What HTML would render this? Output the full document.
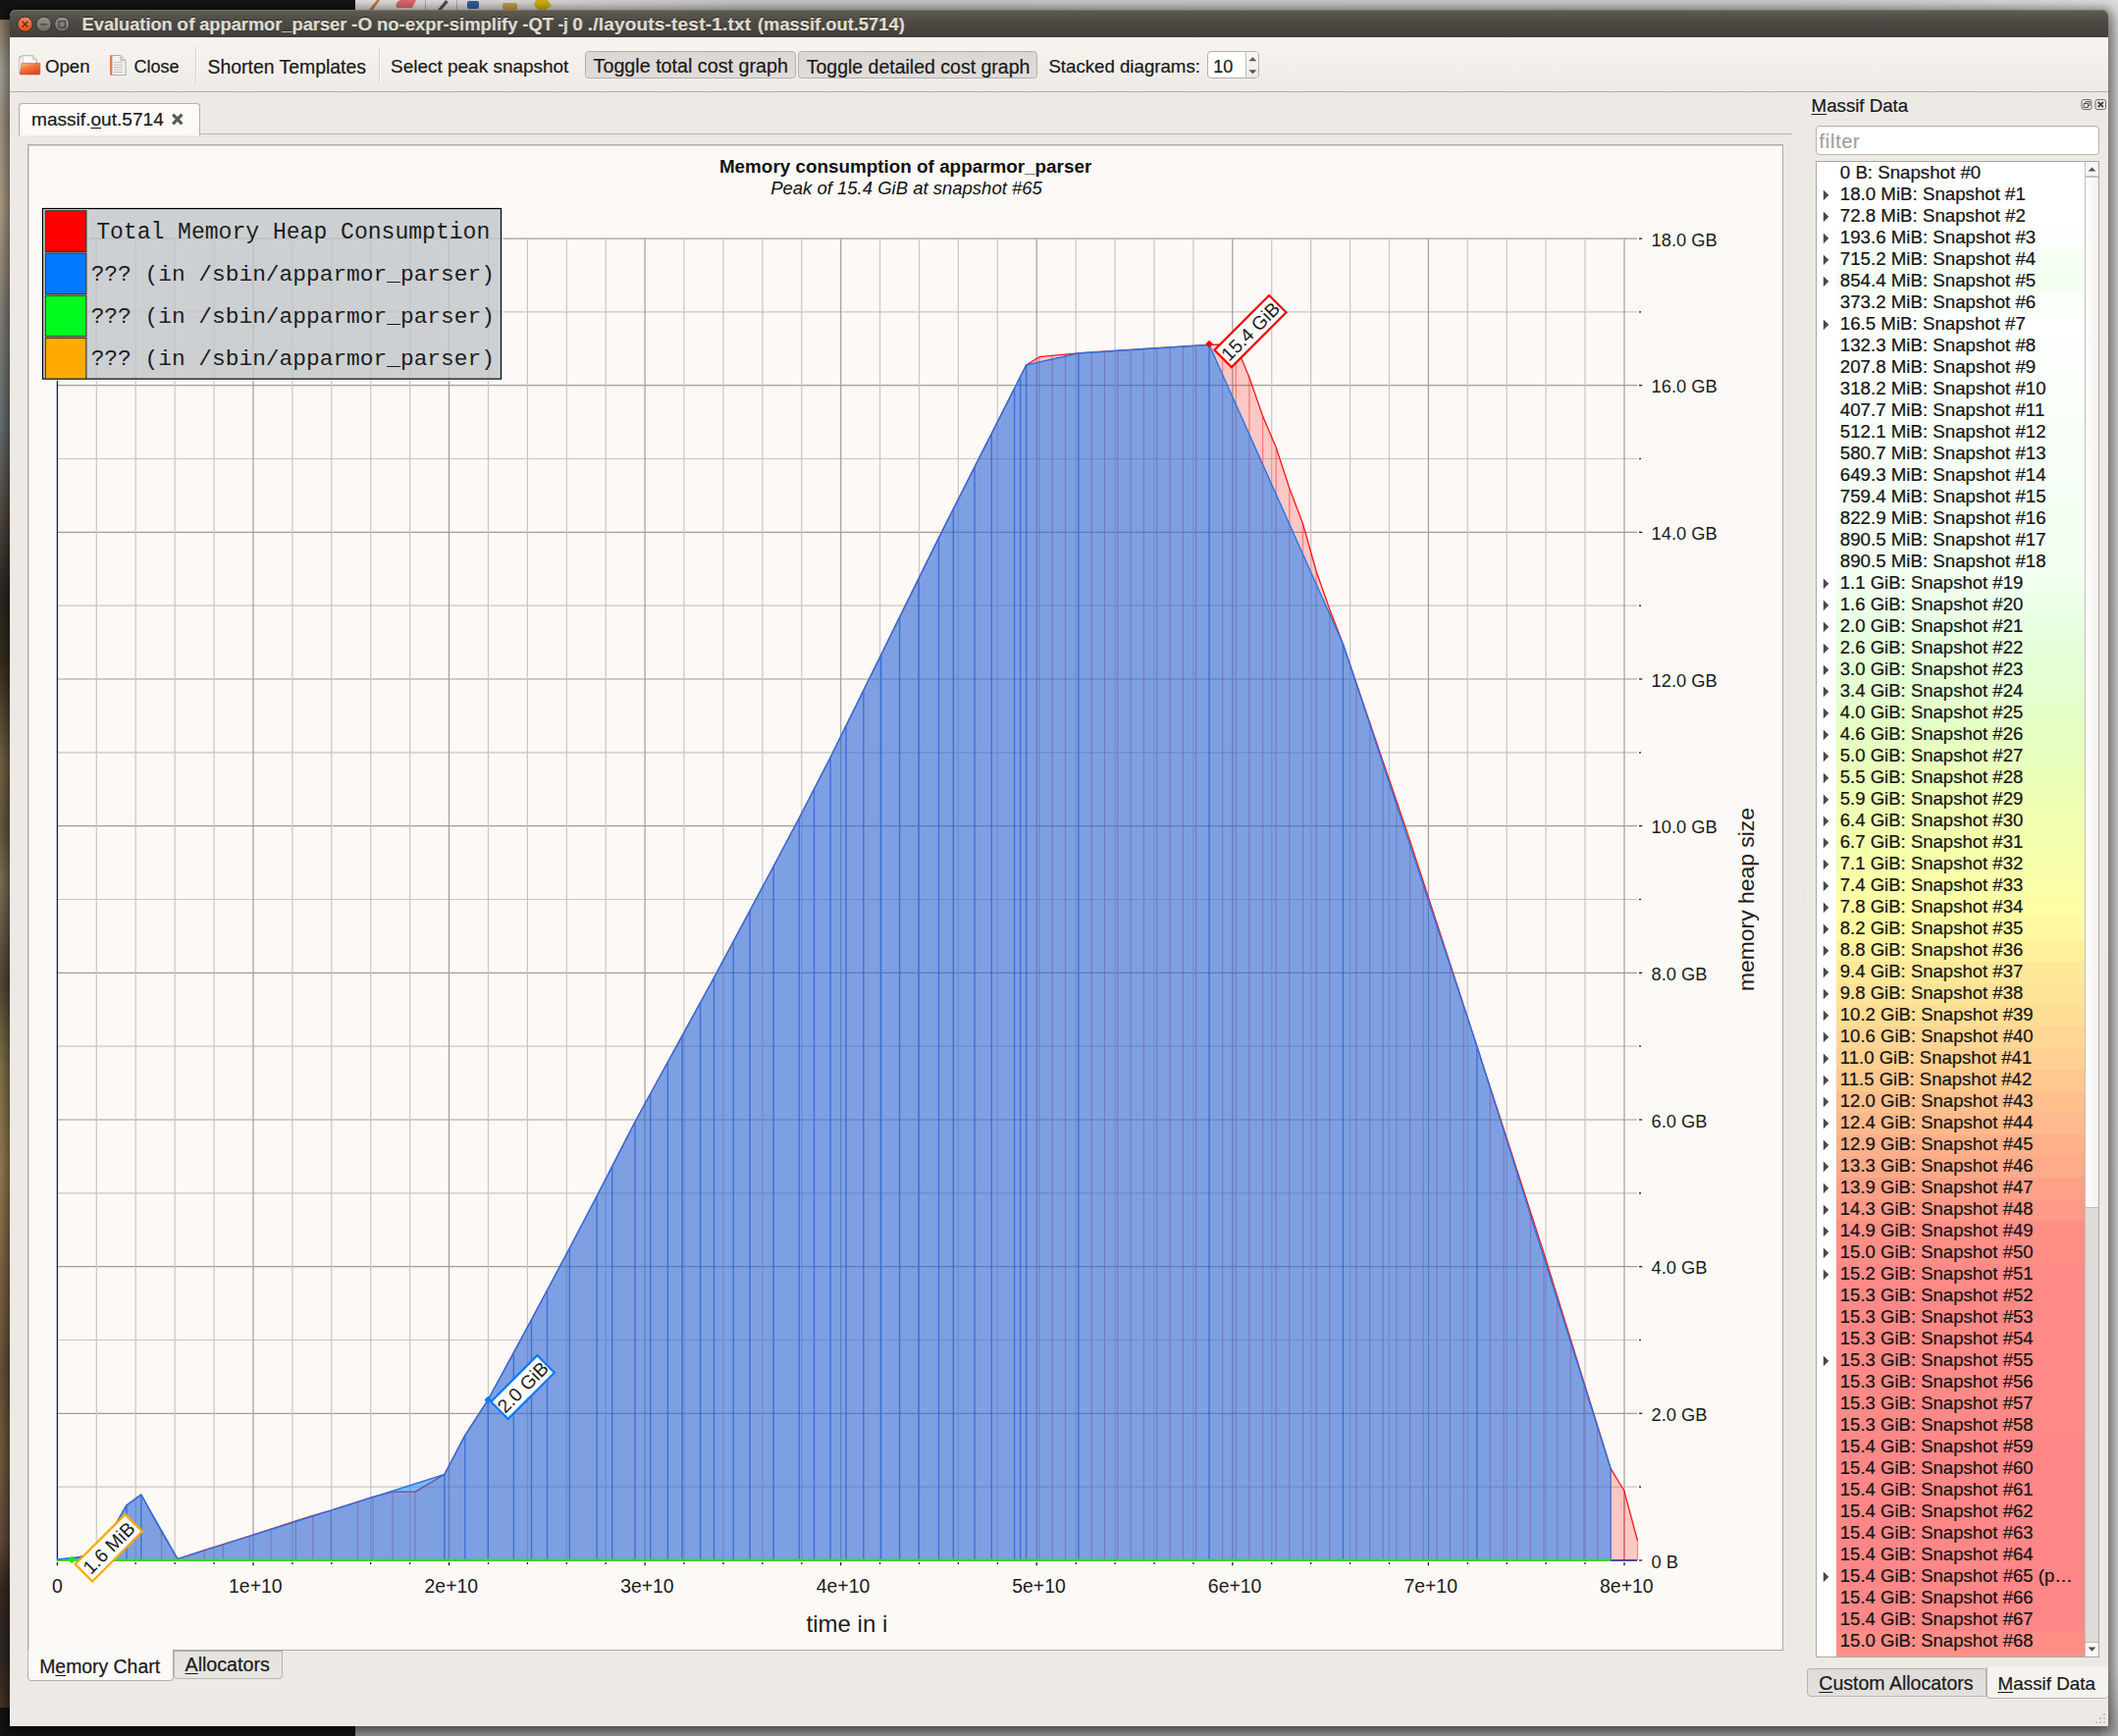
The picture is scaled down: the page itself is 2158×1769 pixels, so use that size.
<!DOCTYPE html>
<html><head><meta charset="utf-8"><title>Massif Visualizer</title>
<style>
html,body{margin:0;padding:0}
body{width:2158px;height:1769px;position:relative;overflow:hidden;background:#141414;font-family:"Liberation Sans",sans-serif}
.a{position:absolute}
.t{position:absolute;line-height:0;white-space:nowrap;-webkit-text-stroke:0.22px currentColor}
u{text-decoration:underline;text-underline-offset:2px;text-decoration-thickness:1px}
.row{position:absolute;left:1871px;width:253.5px;height:22px}
</style></head><body>

<div class="a" style="left:0;top:0;width:2158px;height:1769px;background:#141414"></div>
<div class="a" style="left:0;top:20px;width:12px;height:1720px;background:linear-gradient(180deg,#8f7f66 0%,#b0aaa2 3%,#a89c8c 6%,#b9a78d 11%,#8f8a80 17%,#6f7878 24%,#5b5148 29%,#2e2a22 34%,#3a301f 38%,#7b6a49 44%,#6e5f45 48%,#86795e 51%,#5a4c38 57%,#8a7a50 62%,#a08455 68%,#8a6b4c 74%,#6f5a3b 80%,#7a6242 85%,#6a5040 90%,#3a2e24 93%,#332a24 97%,#4a392a 100%)"></div>
<div class="a" style="left:362px;top:0;width:1796px;height:12px;background:linear-gradient(90deg,#e4e2df 0,#dcdad7 200px,#c9c9c9 400px,#cfcfcf 1500px,#e2e2e2 1796px)"></div>
<div class="a" style="left:362px;top:1750px;width:1796px;height:19px;background:#a2a2a2"></div>
<div class="a" style="left:2140px;top:0;width:18px;height:1769px;background:linear-gradient(180deg,#dedede 0,#d2d2d2 40px,#d0d0d0 1700px,#a8a8a8 1769px)"></div>
<svg class="a" style="left:362px;top:0" width="220" height="10"><path d="M14 10 L22 0 L25 0 L18 10Z" fill="#c77a3a"/><path d="M42 8 Q40 2 46 0 L62 0 L58 8Z" fill="#e36a6a"/><rect x="71" y="0" width="1" height="10" fill="#aaa"/><path d="M84 10 L92 0 L95 2 L88 10Z" fill="#555"/><rect x="103" y="0" width="1" height="10" fill="#aaa"/><rect x="114" y="1" width="12" height="8" rx="2" fill="#3a5f9a"/><rect x="150" y="3" width="15" height="7" rx="2" fill="#c9a24a"/><path d="M184 0 L196 0 L200 6 L194 10 L186 10 L182 5Z" fill="#d4b20f"/></svg>
<div class="a" style="left:10px;top:10px;width:2138px;height:1749px;background:#edeae6;border-radius:6px 6px 0 0;box-shadow:0 3px 12.5px 3.8px rgba(0,0,0,.55)"></div>
<div class="a" style="left:10px;top:10px;width:2138px;height:28px;background:linear-gradient(180deg,#5f5c53 0,#4d4a43 45%,#403e38 100%);border-radius:6px 6px 0 0;box-shadow:inset 0 1px 0 #75726a"></div>
<svg class="a" style="left:14px;top:13px" width="64" height="24" viewBox="0 0 64 24">
<defs><linearGradient id="gc" x1="0" y1="0" x2="0" y2="1"><stop offset="0" stop-color="#f58a5c"/><stop offset="1" stop-color="#dc4a18"/></linearGradient>
<linearGradient id="gg" x1="0" y1="0" x2="0" y2="1"><stop offset="0" stop-color="#97948b"/><stop offset="1" stop-color="#6d6a63"/></linearGradient></defs>
<circle cx="11.5" cy="11.7" r="7.6" fill="url(#gc)" stroke="#3a2a22" stroke-width="1"/>
<path d="M9 9.2 L14 14.2 M14 9.2 L9 14.2" stroke="#4a1c0a" stroke-width="1.15" stroke-linecap="round"/>
<circle cx="30.6" cy="11.7" r="7.6" fill="url(#gg)" stroke="#34332f" stroke-width="1"/>
<path d="M27.2 11.9 L34 11.9" stroke="#3b3a36" stroke-width="1.15"/>
<circle cx="49.2" cy="11.7" r="7.6" fill="url(#gg)" stroke="#34332f" stroke-width="1"/>
<rect x="46" y="8.7" width="6.4" height="6.2" fill="none" stroke="#3b3a36" stroke-width="1.1"/>
</svg>
<span class="t" style="left:83.6px;top:24.98px;font-size:18.23px;color:#dfdbd2;font-weight:bold;font-style:normal;letter-spacing:0.00px;text-shadow:0 -1px 0 rgba(0,0,0,.5)">Evaluation</span>
<span class="t" style="left:180.3px;top:24.72px;font-size:19.0px;color:#dfdbd2;font-weight:bold;font-style:normal;letter-spacing:0.23px;text-shadow:0 -1px 0 rgba(0,0,0,.5)">of</span>
<span class="t" style="left:203.2px;top:24.97px;font-size:18.26px;color:#dfdbd2;font-weight:bold;font-style:normal;letter-spacing:0.00px;text-shadow:0 -1px 0 rgba(0,0,0,.5)">apparmor_parser</span>
<span class="t" style="left:357.9px;top:24.72px;font-size:19.0px;color:#dfdbd2;font-weight:bold;font-style:normal;letter-spacing:0.25px;text-shadow:0 -1px 0 rgba(0,0,0,.5)">-O</span>
<span class="t" style="left:384.0px;top:24.90px;font-size:18.46px;color:#dfdbd2;font-weight:bold;font-style:normal;letter-spacing:0.00px;text-shadow:0 -1px 0 rgba(0,0,0,.5)">no-expr-simplify</span>
<span class="t" style="left:532.3px;top:24.94px;font-size:18.36px;color:#dfdbd2;font-weight:bold;font-style:normal;letter-spacing:0.00px;text-shadow:0 -1px 0 rgba(0,0,0,.5)">-QT</span>
<span class="t" style="left:568.4px;top:25.20px;font-size:17.6px;color:#dfdbd2;font-weight:bold;font-style:normal;letter-spacing:-0.17px;text-shadow:0 -1px 0 rgba(0,0,0,.5)">-j</span>
<span class="t" style="left:583.3px;top:24.72px;font-size:19.0px;color:#dfdbd2;font-weight:bold;font-style:normal;letter-spacing:0.43px;text-shadow:0 -1px 0 rgba(0,0,0,.5)">0</span>
<span class="t" style="left:598.8px;top:24.72px;font-size:19.0px;color:#dfdbd2;font-weight:bold;font-style:normal;letter-spacing:0.19px;text-shadow:0 -1px 0 rgba(0,0,0,.5)">./layouts-test-1.txt</span>
<span class="t" style="left:772.0px;top:24.95px;font-size:18.33px;color:#dfdbd2;font-weight:bold;font-style:normal;letter-spacing:0.00px;text-shadow:0 -1px 0 rgba(0,0,0,.5)">(massif.out.5714)</span>
<div class="a" style="left:10px;top:38px;width:2138px;height:55px;background:linear-gradient(180deg,#f8f5f1,#eeebe7)"></div>
<div class="a" style="left:10px;top:93px;width:2138px;height:1px;background:#b4b1ad"></div>
<svg class="a" style="left:18px;top:54px" width="25" height="24" viewBox="0 0 25 24">
<defs><linearGradient id="of" x1="0" y1="0" x2="0.6" y2="1"><stop offset="0" stop-color="#f6c08c"/><stop offset=".45" stop-color="#ee7a45"/><stop offset="1" stop-color="#e5431a"/></linearGradient></defs>
<path d="M1.6 3.5 h3 v-1 h10.8 l4.1 4 v14.3 h-17.9z" fill="#f1f0ee" stroke="#bcbab6" stroke-width=".9"/>
<path d="M5.6 3 h9.5 l3.6 3.6 v6 h-13.1z" fill="#fbfbfa" stroke="#c9c7c3" stroke-width=".7"/>
<path d="M15.2 2.8 v3.8 h3.6" fill="#e3e1dd" stroke="#bcbab6" stroke-width=".7"/>
<rect x="2.4" y="4.6" width="1.8" height="1" fill="#f0b070"/>
<path d="M4.2 10.4 h18.6 v10.6 q0 .9 -.9 .9 h-18.6 q-1 0 -.9 -1z" fill="url(#of)" stroke="#d9481d" stroke-width=".6"/>
</svg>
<span class="t" style="left:45.9px;top:67.82px;font-size:18.7px;color:#1a1a1a;font-weight:normal;font-style:normal;">Open</span>
<svg class="a" style="left:110px;top:55px" width="20" height="23" viewBox="0 0 20 23">
<path d="M2.5 1.5 h10.5 l5 5 v15 h-15.5z" fill="#f2f1ef" stroke="#b3b0ab"/>
<path d="M13 1.5 v5 h5" fill="#dedcd8" stroke="#b3b0ab"/>
<rect x="2" y="1.5" width="2.4" height="20" fill="#e87a4a"/>
<path d="M6 8.5h9M6 11h9M6 13.5h9M6 16h9M6 18.5h9" stroke="#c4c2be" stroke-width="1"/>
</svg>
<span class="t" style="left:136.5px;top:68.06px;font-size:18.0px;color:#1a1a1a;font-weight:normal;font-style:normal;">Close</span>
<div class="a" style="left:199px;top:48px;width:1px;height:37px;background:#d5d2ce"></div><div class="a" style="left:200px;top:48px;width:1px;height:37px;background:#fbfaf8"></div>
<span class="t" style="left:211.5px;top:67.57px;font-size:19.41px;color:#1a1a1a;font-weight:normal;font-style:normal;">Shorten Templates</span>
<div class="a" style="left:386px;top:48px;width:1px;height:37px;background:#d5d2ce"></div><div class="a" style="left:387px;top:48px;width:1px;height:37px;background:#fbfaf8"></div>
<span class="t" style="left:398.0px;top:67.72px;font-size:18.98px;color:#1a1a1a;font-weight:normal;font-style:normal;">Select peak snapshot</span>
<div class="a" style="left:596.3px;top:52.3px;width:214.3px;height:27.4px;background:linear-gradient(180deg,#dad7d4,#e0dddb);border:1px solid #b3b0ab;border-radius:3.5px;box-sizing:border-box"></div>
<div class="a" style="left:813.4px;top:52.3px;width:243.2px;height:27.4px;background:linear-gradient(180deg,#dad7d4,#e0dddb);border:1px solid #b3b0ab;border-radius:3.5px;box-sizing:border-box"></div>
<span class="t" style="left:604.6px;top:67.47px;font-size:19.72px;color:#1a1a1a;font-weight:normal;font-style:normal;">Toggle total cost graph</span>
<span class="t" style="left:821.7px;top:67.54px;font-size:19.51px;color:#1a1a1a;font-weight:normal;font-style:normal;">Toggle detailed cost graph</span>
<span class="t" style="left:1068.4px;top:67.83px;font-size:18.67px;color:#1a1a1a;font-weight:normal;font-style:normal;">Stacked diagrams:</span>
<div class="a" style="left:1230.3px;top:52.3px;width:53px;height:28.2px;background:#fff;border:1px solid #b3b0ab;border-radius:4px;box-sizing:border-box"></div>
<div class="a" style="left:1269px;top:53.3px;width:13.3px;height:26.2px;background:linear-gradient(180deg,#f9f8f6,#eceae7);border-left:1px solid #c4c1bc;border-radius:0 3px 3px 0;box-sizing:border-box"></div>
<svg class="a" style="left:1270px;top:54px" width="13" height="26"><path d="M2.4 8.3 L6.4 4.2 L10.4 8.3Z" fill="#555"/><path d="M2.4 17.2 L6.4 21.2 L10.4 17.2Z" fill="#555"/></svg>
<span class="t" style="left:1236.2px;top:68.06px;font-size:18.0px;color:#1a1a1a;font-weight:normal;font-style:normal;">10</span>
<div class="a" style="left:19px;top:136px;width:1807px;height:1px;background:#b9b6b2"></div>
<div class="a" style="left:19px;top:104.5px;width:185px;height:33px;background:linear-gradient(180deg,#fdfcfb,#fbf9f7);border:1px solid #b3b0ab;border-bottom:none;border-radius:4px 4px 0 0;box-sizing:border-box"></div>
<span class="t" style="left:32.0px;top:121.68px;font-size:19.1px;color:#1a1a1a;font-weight:normal;font-style:normal;">massif.<u>o</u>ut.5714</span>
<svg class="a" style="left:174px;top:114px" width="14" height="15"><path d="M2.2 2.6 L11.4 12.4 M11.4 2.6 L2.2 12.4" stroke="#5e5c58" stroke-width="3.2"/></svg>
<div class="a" style="left:28px;top:147px;width:1789px;height:1535px;background:#fcf9f6;border:1px solid #aeaba7;box-sizing:border-box;box-shadow:inset 1px 1px 0 #d9d6d2"></div>
<svg class="a" style="left:0;top:0" width="1830" height="1700" viewBox="0 0 1830 1700" font-family='"Liberation Sans", sans-serif'>
<line x1="58.4" y1="1515.2" x2="1668.0" y2="1515.2" stroke="#c7c7c7" stroke-width="1.2"/>
<line x1="58.4" y1="1440.3" x2="1668.0" y2="1440.3" stroke="#9e9e9e" stroke-width="1.2"/>
<line x1="58.4" y1="1365.5" x2="1668.0" y2="1365.5" stroke="#c7c7c7" stroke-width="1.2"/>
<line x1="58.4" y1="1290.7" x2="1668.0" y2="1290.7" stroke="#9e9e9e" stroke-width="1.2"/>
<line x1="58.4" y1="1215.8" x2="1668.0" y2="1215.8" stroke="#c7c7c7" stroke-width="1.2"/>
<line x1="58.4" y1="1141.0" x2="1668.0" y2="1141.0" stroke="#9e9e9e" stroke-width="1.2"/>
<line x1="58.4" y1="1066.2" x2="1668.0" y2="1066.2" stroke="#c7c7c7" stroke-width="1.2"/>
<line x1="58.4" y1="991.4" x2="1668.0" y2="991.4" stroke="#9e9e9e" stroke-width="1.2"/>
<line x1="58.4" y1="916.5" x2="1668.0" y2="916.5" stroke="#c7c7c7" stroke-width="1.2"/>
<line x1="58.4" y1="841.7" x2="1668.0" y2="841.7" stroke="#9e9e9e" stroke-width="1.2"/>
<line x1="58.4" y1="766.9" x2="1668.0" y2="766.9" stroke="#c7c7c7" stroke-width="1.2"/>
<line x1="58.4" y1="692.0" x2="1668.0" y2="692.0" stroke="#9e9e9e" stroke-width="1.2"/>
<line x1="58.4" y1="617.2" x2="1668.0" y2="617.2" stroke="#c7c7c7" stroke-width="1.2"/>
<line x1="58.4" y1="542.4" x2="1668.0" y2="542.4" stroke="#9e9e9e" stroke-width="1.2"/>
<line x1="58.4" y1="467.5" x2="1668.0" y2="467.5" stroke="#c7c7c7" stroke-width="1.2"/>
<line x1="58.4" y1="392.7" x2="1668.0" y2="392.7" stroke="#9e9e9e" stroke-width="1.2"/>
<line x1="58.4" y1="317.9" x2="1668.0" y2="317.9" stroke="#c7c7c7" stroke-width="1.2"/>
<line x1="58.4" y1="243.1" x2="1668.0" y2="243.1" stroke="#9e9e9e" stroke-width="1.2"/>
<line x1="98.3" y1="243.1" x2="98.3" y2="1590.0" stroke="#c7c7c7" stroke-width="1.2"/>
<line x1="138.2" y1="243.1" x2="138.2" y2="1590.0" stroke="#c7c7c7" stroke-width="1.2"/>
<line x1="178.1" y1="243.1" x2="178.1" y2="1590.0" stroke="#c7c7c7" stroke-width="1.2"/>
<line x1="218.1" y1="243.1" x2="218.1" y2="1590.0" stroke="#c7c7c7" stroke-width="1.2"/>
<line x1="258.0" y1="243.1" x2="258.0" y2="1590.0" stroke="#9e9e9e" stroke-width="1.2"/>
<line x1="297.9" y1="243.1" x2="297.9" y2="1590.0" stroke="#c7c7c7" stroke-width="1.2"/>
<line x1="337.8" y1="243.1" x2="337.8" y2="1590.0" stroke="#c7c7c7" stroke-width="1.2"/>
<line x1="377.7" y1="243.1" x2="377.7" y2="1590.0" stroke="#c7c7c7" stroke-width="1.2"/>
<line x1="417.6" y1="243.1" x2="417.6" y2="1590.0" stroke="#c7c7c7" stroke-width="1.2"/>
<line x1="457.5" y1="243.1" x2="457.5" y2="1590.0" stroke="#9e9e9e" stroke-width="1.2"/>
<line x1="497.5" y1="243.1" x2="497.5" y2="1590.0" stroke="#c7c7c7" stroke-width="1.2"/>
<line x1="537.4" y1="243.1" x2="537.4" y2="1590.0" stroke="#c7c7c7" stroke-width="1.2"/>
<line x1="577.3" y1="243.1" x2="577.3" y2="1590.0" stroke="#c7c7c7" stroke-width="1.2"/>
<line x1="617.2" y1="243.1" x2="617.2" y2="1590.0" stroke="#c7c7c7" stroke-width="1.2"/>
<line x1="657.1" y1="243.1" x2="657.1" y2="1590.0" stroke="#9e9e9e" stroke-width="1.2"/>
<line x1="697.0" y1="243.1" x2="697.0" y2="1590.0" stroke="#c7c7c7" stroke-width="1.2"/>
<line x1="736.9" y1="243.1" x2="736.9" y2="1590.0" stroke="#c7c7c7" stroke-width="1.2"/>
<line x1="776.9" y1="243.1" x2="776.9" y2="1590.0" stroke="#c7c7c7" stroke-width="1.2"/>
<line x1="816.8" y1="243.1" x2="816.8" y2="1590.0" stroke="#c7c7c7" stroke-width="1.2"/>
<line x1="856.7" y1="243.1" x2="856.7" y2="1590.0" stroke="#9e9e9e" stroke-width="1.2"/>
<line x1="896.6" y1="243.1" x2="896.6" y2="1590.0" stroke="#c7c7c7" stroke-width="1.2"/>
<line x1="936.5" y1="243.1" x2="936.5" y2="1590.0" stroke="#c7c7c7" stroke-width="1.2"/>
<line x1="976.4" y1="243.1" x2="976.4" y2="1590.0" stroke="#c7c7c7" stroke-width="1.2"/>
<line x1="1016.3" y1="243.1" x2="1016.3" y2="1590.0" stroke="#c7c7c7" stroke-width="1.2"/>
<line x1="1056.2" y1="243.1" x2="1056.2" y2="1590.0" stroke="#9e9e9e" stroke-width="1.2"/>
<line x1="1096.2" y1="243.1" x2="1096.2" y2="1590.0" stroke="#c7c7c7" stroke-width="1.2"/>
<line x1="1136.1" y1="243.1" x2="1136.1" y2="1590.0" stroke="#c7c7c7" stroke-width="1.2"/>
<line x1="1176.0" y1="243.1" x2="1176.0" y2="1590.0" stroke="#c7c7c7" stroke-width="1.2"/>
<line x1="1215.9" y1="243.1" x2="1215.9" y2="1590.0" stroke="#c7c7c7" stroke-width="1.2"/>
<line x1="1255.8" y1="243.1" x2="1255.8" y2="1590.0" stroke="#9e9e9e" stroke-width="1.2"/>
<line x1="1295.7" y1="243.1" x2="1295.7" y2="1590.0" stroke="#c7c7c7" stroke-width="1.2"/>
<line x1="1335.6" y1="243.1" x2="1335.6" y2="1590.0" stroke="#c7c7c7" stroke-width="1.2"/>
<line x1="1375.6" y1="243.1" x2="1375.6" y2="1590.0" stroke="#c7c7c7" stroke-width="1.2"/>
<line x1="1415.5" y1="243.1" x2="1415.5" y2="1590.0" stroke="#c7c7c7" stroke-width="1.2"/>
<line x1="1455.4" y1="243.1" x2="1455.4" y2="1590.0" stroke="#9e9e9e" stroke-width="1.2"/>
<line x1="1495.3" y1="243.1" x2="1495.3" y2="1590.0" stroke="#c7c7c7" stroke-width="1.2"/>
<line x1="1535.2" y1="243.1" x2="1535.2" y2="1590.0" stroke="#c7c7c7" stroke-width="1.2"/>
<line x1="1575.1" y1="243.1" x2="1575.1" y2="1590.0" stroke="#c7c7c7" stroke-width="1.2"/>
<line x1="1615.0" y1="243.1" x2="1615.0" y2="1590.0" stroke="#c7c7c7" stroke-width="1.2"/>
<line x1="1655.0" y1="243.1" x2="1655.0" y2="1590.0" stroke="#9e9e9e" stroke-width="1.2"/>
<line x1="58.4" y1="243.1" x2="58.4" y2="1590.0" stroke="#10108a" stroke-width="1.3"/>
<line x1="58.4" y1="1590.0" x2="1668.0" y2="1590.0" stroke="#10108a" stroke-width="1.3"/>
<polygon points="58.5,1589.5 73.0,1588.6 90.0,1584.3 105.5,1574.8 128.9,1533.9 143.8,1523.0 164.5,1560.7 181.0,1588.7 208.2,1579.6 227.4,1573.7 254.5,1565.0 276.0,1558.0 301.4,1549.8 318.9,1544.4 337.1,1539.1 364.5,1530.4 380.0,1525.4 400.0,1520.1 423.0,1520.1 452.8,1502.5 473.8,1462.6 497.3,1426.3 523.4,1378.4 541.5,1344.8 557.5,1314.7 580.4,1271.7 608.2,1218.7 623.7,1188.6 647.0,1143.3 662.7,1114.5 680.4,1082.2 695.0,1055.6 713.6,1021.6 727.5,996.3 747.3,959.3 764.1,927.8 788.2,882.7 814.3,833.5 829.5,804.0 846.1,771.8 862.0,739.6 879.8,703.5 897.7,667.2 916.6,628.9 936.0,589.6 956.5,548.1 971.4,518.5 993.0,475.9 1010.3,441.7 1033.6,395.7 1039.6,383.8 1045.6,372.0 1058.9,363.7 1072.2,362.4 1085.5,361.1 1098.9,359.8 1112.2,358.9 1125.5,358.1 1138.8,357.2 1152.1,356.4 1165.4,355.5 1178.7,354.7 1192.1,353.8 1205.4,353.0 1218.7,352.1 1232.0,351.3 1245.6,351.0 1259.3,352.0 1272.9,384.5 1286.6,424.0 1300.2,456.0 1313.8,497.5 1327.5,533.8 1341.1,582.0 1354.8,621.0 1368.4,656.2 1382.0,696.3 1395.7,736.4 1409.3,776.4 1423.0,816.5 1436.6,856.6 1450.2,898.5 1463.9,940.4 1477.5,982.2 1491.2,1024.1 1504.8,1066.0 1518.4,1108.2 1532.1,1150.3 1545.7,1192.5 1559.4,1234.7 1573.0,1276.8 1586.6,1320.8 1600.3,1364.8 1613.9,1408.8 1627.6,1452.7 1641.2,1496.7 1654.8,1519.0 1668.5,1570.0 1668.5,1590.0 58.4,1590.0" fill="rgba(255,0,0,0.2)"/>
<line x1="73.0" y1="1588.6" x2="73.0" y2="1590.0" stroke="rgba(255,0,0,0.38)" stroke-width="1.3"/>
<line x1="90.0" y1="1584.3" x2="90.0" y2="1590.0" stroke="rgba(255,0,0,0.38)" stroke-width="1.3"/>
<line x1="105.5" y1="1574.8" x2="105.5" y2="1590.0" stroke="rgba(255,0,0,0.38)" stroke-width="1.3"/>
<line x1="128.9" y1="1533.9" x2="128.9" y2="1590.0" stroke="rgba(255,0,0,0.38)" stroke-width="1.3"/>
<line x1="143.8" y1="1523.0" x2="143.8" y2="1590.0" stroke="rgba(255,0,0,0.38)" stroke-width="1.3"/>
<line x1="164.5" y1="1560.7" x2="164.5" y2="1590.0" stroke="rgba(255,0,0,0.38)" stroke-width="1.3"/>
<line x1="181.0" y1="1588.7" x2="181.0" y2="1590.0" stroke="rgba(255,0,0,0.38)" stroke-width="1.3"/>
<line x1="208.2" y1="1579.6" x2="208.2" y2="1590.0" stroke="rgba(255,0,0,0.38)" stroke-width="1.3"/>
<line x1="227.4" y1="1573.7" x2="227.4" y2="1590.0" stroke="rgba(255,0,0,0.38)" stroke-width="1.3"/>
<line x1="254.5" y1="1565.0" x2="254.5" y2="1590.0" stroke="rgba(255,0,0,0.38)" stroke-width="1.3"/>
<line x1="276.0" y1="1558.0" x2="276.0" y2="1590.0" stroke="rgba(255,0,0,0.38)" stroke-width="1.3"/>
<line x1="301.4" y1="1549.8" x2="301.4" y2="1590.0" stroke="rgba(255,0,0,0.38)" stroke-width="1.3"/>
<line x1="318.9" y1="1544.4" x2="318.9" y2="1590.0" stroke="rgba(255,0,0,0.38)" stroke-width="1.3"/>
<line x1="337.1" y1="1539.1" x2="337.1" y2="1590.0" stroke="rgba(255,0,0,0.38)" stroke-width="1.3"/>
<line x1="364.5" y1="1530.4" x2="364.5" y2="1590.0" stroke="rgba(255,0,0,0.38)" stroke-width="1.3"/>
<line x1="380.0" y1="1525.4" x2="380.0" y2="1590.0" stroke="rgba(255,0,0,0.38)" stroke-width="1.3"/>
<line x1="400.0" y1="1520.1" x2="400.0" y2="1590.0" stroke="rgba(255,0,0,0.38)" stroke-width="1.3"/>
<line x1="423.0" y1="1520.1" x2="423.0" y2="1590.0" stroke="rgba(255,0,0,0.38)" stroke-width="1.3"/>
<line x1="452.8" y1="1502.5" x2="452.8" y2="1590.0" stroke="rgba(255,0,0,0.38)" stroke-width="1.3"/>
<line x1="473.8" y1="1462.6" x2="473.8" y2="1590.0" stroke="rgba(255,0,0,0.38)" stroke-width="1.3"/>
<line x1="497.3" y1="1426.3" x2="497.3" y2="1590.0" stroke="rgba(255,0,0,0.38)" stroke-width="1.3"/>
<line x1="523.4" y1="1378.4" x2="523.4" y2="1590.0" stroke="rgba(255,0,0,0.38)" stroke-width="1.3"/>
<line x1="541.5" y1="1344.8" x2="541.5" y2="1590.0" stroke="rgba(255,0,0,0.38)" stroke-width="1.3"/>
<line x1="557.5" y1="1314.7" x2="557.5" y2="1590.0" stroke="rgba(255,0,0,0.38)" stroke-width="1.3"/>
<line x1="580.4" y1="1271.7" x2="580.4" y2="1590.0" stroke="rgba(255,0,0,0.38)" stroke-width="1.3"/>
<line x1="608.2" y1="1218.7" x2="608.2" y2="1590.0" stroke="rgba(255,0,0,0.38)" stroke-width="1.3"/>
<line x1="623.7" y1="1188.6" x2="623.7" y2="1590.0" stroke="rgba(255,0,0,0.38)" stroke-width="1.3"/>
<line x1="647.0" y1="1143.3" x2="647.0" y2="1590.0" stroke="rgba(255,0,0,0.38)" stroke-width="1.3"/>
<line x1="662.7" y1="1114.5" x2="662.7" y2="1590.0" stroke="rgba(255,0,0,0.38)" stroke-width="1.3"/>
<line x1="680.4" y1="1082.2" x2="680.4" y2="1590.0" stroke="rgba(255,0,0,0.38)" stroke-width="1.3"/>
<line x1="695.0" y1="1055.6" x2="695.0" y2="1590.0" stroke="rgba(255,0,0,0.38)" stroke-width="1.3"/>
<line x1="713.6" y1="1021.6" x2="713.6" y2="1590.0" stroke="rgba(255,0,0,0.38)" stroke-width="1.3"/>
<line x1="727.5" y1="996.3" x2="727.5" y2="1590.0" stroke="rgba(255,0,0,0.38)" stroke-width="1.3"/>
<line x1="747.3" y1="959.3" x2="747.3" y2="1590.0" stroke="rgba(255,0,0,0.38)" stroke-width="1.3"/>
<line x1="764.1" y1="927.8" x2="764.1" y2="1590.0" stroke="rgba(255,0,0,0.38)" stroke-width="1.3"/>
<line x1="788.2" y1="882.7" x2="788.2" y2="1590.0" stroke="rgba(255,0,0,0.38)" stroke-width="1.3"/>
<line x1="814.3" y1="833.5" x2="814.3" y2="1590.0" stroke="rgba(255,0,0,0.38)" stroke-width="1.3"/>
<line x1="829.5" y1="804.0" x2="829.5" y2="1590.0" stroke="rgba(255,0,0,0.38)" stroke-width="1.3"/>
<line x1="846.1" y1="771.8" x2="846.1" y2="1590.0" stroke="rgba(255,0,0,0.38)" stroke-width="1.3"/>
<line x1="862.0" y1="739.6" x2="862.0" y2="1590.0" stroke="rgba(255,0,0,0.38)" stroke-width="1.3"/>
<line x1="879.8" y1="703.5" x2="879.8" y2="1590.0" stroke="rgba(255,0,0,0.38)" stroke-width="1.3"/>
<line x1="897.7" y1="667.2" x2="897.7" y2="1590.0" stroke="rgba(255,0,0,0.38)" stroke-width="1.3"/>
<line x1="916.6" y1="628.9" x2="916.6" y2="1590.0" stroke="rgba(255,0,0,0.38)" stroke-width="1.3"/>
<line x1="936.0" y1="589.6" x2="936.0" y2="1590.0" stroke="rgba(255,0,0,0.38)" stroke-width="1.3"/>
<line x1="956.5" y1="548.1" x2="956.5" y2="1590.0" stroke="rgba(255,0,0,0.38)" stroke-width="1.3"/>
<line x1="971.4" y1="518.5" x2="971.4" y2="1590.0" stroke="rgba(255,0,0,0.38)" stroke-width="1.3"/>
<line x1="993.0" y1="475.9" x2="993.0" y2="1590.0" stroke="rgba(255,0,0,0.38)" stroke-width="1.3"/>
<line x1="1010.3" y1="441.7" x2="1010.3" y2="1590.0" stroke="rgba(255,0,0,0.38)" stroke-width="1.3"/>
<line x1="1033.6" y1="395.7" x2="1033.6" y2="1590.0" stroke="rgba(255,0,0,0.38)" stroke-width="1.3"/>
<line x1="1039.6" y1="383.8" x2="1039.6" y2="1590.0" stroke="rgba(255,0,0,0.38)" stroke-width="1.3"/>
<line x1="1045.6" y1="372.0" x2="1045.6" y2="1590.0" stroke="rgba(255,0,0,0.38)" stroke-width="1.3"/>
<line x1="1058.9" y1="363.7" x2="1058.9" y2="1590.0" stroke="rgba(255,0,0,0.38)" stroke-width="1.3"/>
<line x1="1072.2" y1="362.4" x2="1072.2" y2="1590.0" stroke="rgba(255,0,0,0.38)" stroke-width="1.3"/>
<line x1="1085.5" y1="361.1" x2="1085.5" y2="1590.0" stroke="rgba(255,0,0,0.38)" stroke-width="1.3"/>
<line x1="1098.9" y1="359.8" x2="1098.9" y2="1590.0" stroke="rgba(255,0,0,0.38)" stroke-width="1.3"/>
<line x1="1112.2" y1="358.9" x2="1112.2" y2="1590.0" stroke="rgba(255,0,0,0.38)" stroke-width="1.3"/>
<line x1="1125.5" y1="358.1" x2="1125.5" y2="1590.0" stroke="rgba(255,0,0,0.38)" stroke-width="1.3"/>
<line x1="1138.8" y1="357.2" x2="1138.8" y2="1590.0" stroke="rgba(255,0,0,0.38)" stroke-width="1.3"/>
<line x1="1152.1" y1="356.4" x2="1152.1" y2="1590.0" stroke="rgba(255,0,0,0.38)" stroke-width="1.3"/>
<line x1="1165.4" y1="355.5" x2="1165.4" y2="1590.0" stroke="rgba(255,0,0,0.38)" stroke-width="1.3"/>
<line x1="1178.7" y1="354.7" x2="1178.7" y2="1590.0" stroke="rgba(255,0,0,0.38)" stroke-width="1.3"/>
<line x1="1192.1" y1="353.8" x2="1192.1" y2="1590.0" stroke="rgba(255,0,0,0.38)" stroke-width="1.3"/>
<line x1="1205.4" y1="353.0" x2="1205.4" y2="1590.0" stroke="rgba(255,0,0,0.38)" stroke-width="1.3"/>
<line x1="1218.7" y1="352.1" x2="1218.7" y2="1590.0" stroke="rgba(255,0,0,0.38)" stroke-width="1.3"/>
<line x1="1232.0" y1="351.3" x2="1232.0" y2="1590.0" stroke="rgba(255,0,0,0.38)" stroke-width="1.3"/>
<line x1="1245.6" y1="351.0" x2="1245.6" y2="1590.0" stroke="rgba(255,0,0,0.38)" stroke-width="1.3"/>
<line x1="1259.3" y1="352.0" x2="1259.3" y2="1590.0" stroke="rgba(255,0,0,0.38)" stroke-width="1.3"/>
<line x1="1272.9" y1="384.5" x2="1272.9" y2="1590.0" stroke="rgba(255,0,0,0.38)" stroke-width="1.3"/>
<line x1="1286.6" y1="424.0" x2="1286.6" y2="1590.0" stroke="rgba(255,0,0,0.38)" stroke-width="1.3"/>
<line x1="1300.2" y1="456.0" x2="1300.2" y2="1590.0" stroke="rgba(255,0,0,0.38)" stroke-width="1.3"/>
<line x1="1313.8" y1="497.5" x2="1313.8" y2="1590.0" stroke="rgba(255,0,0,0.38)" stroke-width="1.3"/>
<line x1="1327.5" y1="533.8" x2="1327.5" y2="1590.0" stroke="rgba(255,0,0,0.38)" stroke-width="1.3"/>
<line x1="1341.1" y1="582.0" x2="1341.1" y2="1590.0" stroke="rgba(255,0,0,0.38)" stroke-width="1.3"/>
<line x1="1354.8" y1="621.0" x2="1354.8" y2="1590.0" stroke="rgba(255,0,0,0.38)" stroke-width="1.3"/>
<line x1="1368.4" y1="656.2" x2="1368.4" y2="1590.0" stroke="rgba(255,0,0,0.38)" stroke-width="1.3"/>
<line x1="1382.0" y1="696.3" x2="1382.0" y2="1590.0" stroke="rgba(255,0,0,0.38)" stroke-width="1.3"/>
<line x1="1395.7" y1="736.4" x2="1395.7" y2="1590.0" stroke="rgba(255,0,0,0.38)" stroke-width="1.3"/>
<line x1="1409.3" y1="776.4" x2="1409.3" y2="1590.0" stroke="rgba(255,0,0,0.38)" stroke-width="1.3"/>
<line x1="1423.0" y1="816.5" x2="1423.0" y2="1590.0" stroke="rgba(255,0,0,0.38)" stroke-width="1.3"/>
<line x1="1436.6" y1="856.6" x2="1436.6" y2="1590.0" stroke="rgba(255,0,0,0.38)" stroke-width="1.3"/>
<line x1="1450.2" y1="898.5" x2="1450.2" y2="1590.0" stroke="rgba(255,0,0,0.38)" stroke-width="1.3"/>
<line x1="1463.9" y1="940.4" x2="1463.9" y2="1590.0" stroke="rgba(255,0,0,0.38)" stroke-width="1.3"/>
<line x1="1477.5" y1="982.2" x2="1477.5" y2="1590.0" stroke="rgba(255,0,0,0.38)" stroke-width="1.3"/>
<line x1="1491.2" y1="1024.1" x2="1491.2" y2="1590.0" stroke="rgba(255,0,0,0.38)" stroke-width="1.3"/>
<line x1="1504.8" y1="1066.0" x2="1504.8" y2="1590.0" stroke="rgba(255,0,0,0.38)" stroke-width="1.3"/>
<line x1="1518.4" y1="1108.2" x2="1518.4" y2="1590.0" stroke="rgba(255,0,0,0.38)" stroke-width="1.3"/>
<line x1="1532.1" y1="1150.3" x2="1532.1" y2="1590.0" stroke="rgba(255,0,0,0.38)" stroke-width="1.3"/>
<line x1="1545.7" y1="1192.5" x2="1545.7" y2="1590.0" stroke="rgba(255,0,0,0.38)" stroke-width="1.3"/>
<line x1="1559.4" y1="1234.7" x2="1559.4" y2="1590.0" stroke="rgba(255,0,0,0.38)" stroke-width="1.3"/>
<line x1="1573.0" y1="1276.8" x2="1573.0" y2="1590.0" stroke="rgba(255,0,0,0.38)" stroke-width="1.3"/>
<line x1="1586.6" y1="1320.8" x2="1586.6" y2="1590.0" stroke="rgba(255,0,0,0.38)" stroke-width="1.3"/>
<line x1="1600.3" y1="1364.8" x2="1600.3" y2="1590.0" stroke="rgba(255,0,0,0.38)" stroke-width="1.3"/>
<line x1="1613.9" y1="1408.8" x2="1613.9" y2="1590.0" stroke="rgba(255,0,0,0.38)" stroke-width="1.3"/>
<line x1="1627.6" y1="1452.7" x2="1627.6" y2="1590.0" stroke="rgba(255,0,0,0.38)" stroke-width="1.3"/>
<line x1="1641.2" y1="1496.7" x2="1641.2" y2="1590.0" stroke="rgba(255,0,0,0.38)" stroke-width="1.3"/>
<line x1="1654.8" y1="1519.0" x2="1654.8" y2="1590.0" stroke="rgba(255,0,0,0.38)" stroke-width="1.3"/>
<line x1="1668.5" y1="1570.0" x2="1668.5" y2="1590.0" stroke="rgba(255,0,0,0.38)" stroke-width="1.3"/>
<polyline points="58.5,1589.5 73.0,1588.6 90.0,1584.3 105.5,1574.8 128.9,1533.9 143.8,1523.0 164.5,1560.7 181.0,1588.7 208.2,1579.6 227.4,1573.7 254.5,1565.0 276.0,1558.0 301.4,1549.8 318.9,1544.4 337.1,1539.1 364.5,1530.4 380.0,1525.4 400.0,1520.1 423.0,1520.1 452.8,1502.5 473.8,1462.6 497.3,1426.3 523.4,1378.4 541.5,1344.8 557.5,1314.7 580.4,1271.7 608.2,1218.7 623.7,1188.6 647.0,1143.3 662.7,1114.5 680.4,1082.2 695.0,1055.6 713.6,1021.6 727.5,996.3 747.3,959.3 764.1,927.8 788.2,882.7 814.3,833.5 829.5,804.0 846.1,771.8 862.0,739.6 879.8,703.5 897.7,667.2 916.6,628.9 936.0,589.6 956.5,548.1 971.4,518.5 993.0,475.9 1010.3,441.7 1033.6,395.7 1039.6,383.8 1045.6,372.0 1058.9,363.7 1072.2,362.4 1085.5,361.1 1098.9,359.8 1112.2,358.9 1125.5,358.1 1138.8,357.2 1152.1,356.4 1165.4,355.5 1178.7,354.7 1192.1,353.8 1205.4,353.0 1218.7,352.1 1232.0,351.3 1245.6,351.0 1259.3,352.0 1272.9,384.5 1286.6,424.0 1300.2,456.0 1313.8,497.5 1327.5,533.8 1341.1,582.0 1354.8,621.0 1368.4,656.2 1382.0,696.3 1395.7,736.4 1409.3,776.4 1423.0,816.5 1436.6,856.6 1450.2,898.5 1463.9,940.4 1477.5,982.2 1491.2,1024.1 1504.8,1066.0 1518.4,1108.2 1532.1,1150.3 1545.7,1192.5 1559.4,1234.7 1573.0,1276.8 1586.6,1320.8 1600.3,1364.8 1613.9,1408.8 1627.6,1452.7 1641.2,1496.7 1654.8,1519.0 1668.5,1570.0" fill="none" stroke="#f41818" stroke-width="1.3" stroke-linejoin="round"/>
<polygon points="58.5,1589.5 73.0,1588.6 90.0,1584.3 105.5,1574.8 128.9,1533.9 143.8,1523.0 181.0,1588.7 452.8,1502.5 473.8,1462.6 497.3,1426.3 523.4,1378.4 541.5,1344.8 557.5,1314.7 580.4,1271.7 608.2,1218.7 623.7,1188.6 647.0,1143.3 662.7,1114.5 680.4,1082.2 695.0,1055.6 713.6,1021.6 727.5,996.3 747.3,959.3 764.1,927.8 788.2,882.7 814.3,833.5 829.5,804.0 846.1,771.8 862.0,739.6 879.8,703.5 897.7,667.2 916.6,628.9 936.0,589.6 956.5,548.1 971.4,518.5 993.0,475.9 1010.3,441.7 1033.6,395.7 1039.6,383.8 1045.6,372.0 1098.9,360.0 1232.0,351.3 1368.4,656.2 1504.8,1066.0 1641.2,1496.7 1641.2,1590.0 58.4,1590.0" fill="rgba(0,122,255,0.5)"/>
<line x1="73.0" y1="1588.6" x2="73.0" y2="1590.0" stroke="rgba(20,110,240,0.62)" stroke-width="1.35"/>
<line x1="90.0" y1="1584.3" x2="90.0" y2="1590.0" stroke="rgba(20,110,240,0.62)" stroke-width="1.35"/>
<line x1="105.5" y1="1574.8" x2="105.5" y2="1590.0" stroke="rgba(20,110,240,0.62)" stroke-width="1.35"/>
<line x1="128.9" y1="1533.9" x2="128.9" y2="1590.0" stroke="rgba(20,110,240,0.62)" stroke-width="1.35"/>
<line x1="143.8" y1="1523.0" x2="143.8" y2="1590.0" stroke="rgba(20,110,240,0.62)" stroke-width="1.35"/>
<line x1="181.0" y1="1588.7" x2="181.0" y2="1590.0" stroke="rgba(20,110,240,0.62)" stroke-width="1.35"/>
<line x1="452.8" y1="1502.5" x2="452.8" y2="1590.0" stroke="rgba(20,110,240,0.62)" stroke-width="1.35"/>
<line x1="473.8" y1="1462.6" x2="473.8" y2="1590.0" stroke="rgba(20,110,240,0.62)" stroke-width="1.35"/>
<line x1="497.3" y1="1426.3" x2="497.3" y2="1590.0" stroke="rgba(20,110,240,0.62)" stroke-width="1.35"/>
<line x1="523.4" y1="1378.4" x2="523.4" y2="1590.0" stroke="rgba(20,110,240,0.62)" stroke-width="1.35"/>
<line x1="541.5" y1="1344.8" x2="541.5" y2="1590.0" stroke="rgba(20,110,240,0.62)" stroke-width="1.35"/>
<line x1="557.5" y1="1314.7" x2="557.5" y2="1590.0" stroke="rgba(20,110,240,0.62)" stroke-width="1.35"/>
<line x1="580.4" y1="1271.7" x2="580.4" y2="1590.0" stroke="rgba(20,110,240,0.62)" stroke-width="1.35"/>
<line x1="608.2" y1="1218.7" x2="608.2" y2="1590.0" stroke="rgba(20,110,240,0.62)" stroke-width="1.35"/>
<line x1="623.7" y1="1188.6" x2="623.7" y2="1590.0" stroke="rgba(20,110,240,0.62)" stroke-width="1.35"/>
<line x1="647.0" y1="1143.3" x2="647.0" y2="1590.0" stroke="rgba(20,110,240,0.62)" stroke-width="1.35"/>
<line x1="662.7" y1="1114.5" x2="662.7" y2="1590.0" stroke="rgba(20,110,240,0.62)" stroke-width="1.35"/>
<line x1="680.4" y1="1082.2" x2="680.4" y2="1590.0" stroke="rgba(20,110,240,0.62)" stroke-width="1.35"/>
<line x1="695.0" y1="1055.6" x2="695.0" y2="1590.0" stroke="rgba(20,110,240,0.62)" stroke-width="1.35"/>
<line x1="713.6" y1="1021.6" x2="713.6" y2="1590.0" stroke="rgba(20,110,240,0.62)" stroke-width="1.35"/>
<line x1="727.5" y1="996.3" x2="727.5" y2="1590.0" stroke="rgba(20,110,240,0.62)" stroke-width="1.35"/>
<line x1="747.3" y1="959.3" x2="747.3" y2="1590.0" stroke="rgba(20,110,240,0.62)" stroke-width="1.35"/>
<line x1="764.1" y1="927.8" x2="764.1" y2="1590.0" stroke="rgba(20,110,240,0.62)" stroke-width="1.35"/>
<line x1="788.2" y1="882.7" x2="788.2" y2="1590.0" stroke="rgba(20,110,240,0.62)" stroke-width="1.35"/>
<line x1="814.3" y1="833.5" x2="814.3" y2="1590.0" stroke="rgba(20,110,240,0.62)" stroke-width="1.35"/>
<line x1="829.5" y1="804.0" x2="829.5" y2="1590.0" stroke="rgba(20,110,240,0.62)" stroke-width="1.35"/>
<line x1="846.1" y1="771.8" x2="846.1" y2="1590.0" stroke="rgba(20,110,240,0.62)" stroke-width="1.35"/>
<line x1="862.0" y1="739.6" x2="862.0" y2="1590.0" stroke="rgba(20,110,240,0.62)" stroke-width="1.35"/>
<line x1="879.8" y1="703.5" x2="879.8" y2="1590.0" stroke="rgba(20,110,240,0.62)" stroke-width="1.35"/>
<line x1="897.7" y1="667.2" x2="897.7" y2="1590.0" stroke="rgba(20,110,240,0.62)" stroke-width="1.35"/>
<line x1="916.6" y1="628.9" x2="916.6" y2="1590.0" stroke="rgba(20,110,240,0.62)" stroke-width="1.35"/>
<line x1="936.0" y1="589.6" x2="936.0" y2="1590.0" stroke="rgba(20,110,240,0.62)" stroke-width="1.35"/>
<line x1="956.5" y1="548.1" x2="956.5" y2="1590.0" stroke="rgba(20,110,240,0.62)" stroke-width="1.35"/>
<line x1="971.4" y1="518.5" x2="971.4" y2="1590.0" stroke="rgba(20,110,240,0.62)" stroke-width="1.35"/>
<line x1="993.0" y1="475.9" x2="993.0" y2="1590.0" stroke="rgba(20,110,240,0.62)" stroke-width="1.35"/>
<line x1="1010.3" y1="441.7" x2="1010.3" y2="1590.0" stroke="rgba(20,110,240,0.62)" stroke-width="1.35"/>
<line x1="1033.6" y1="395.7" x2="1033.6" y2="1590.0" stroke="rgba(20,110,240,0.62)" stroke-width="1.35"/>
<line x1="1039.6" y1="383.8" x2="1039.6" y2="1590.0" stroke="rgba(20,110,240,0.62)" stroke-width="1.35"/>
<line x1="1045.6" y1="372.0" x2="1045.6" y2="1590.0" stroke="rgba(20,110,240,0.62)" stroke-width="1.35"/>
<line x1="1098.9" y1="360.0" x2="1098.9" y2="1590.0" stroke="rgba(20,110,240,0.62)" stroke-width="1.35"/>
<line x1="1232.0" y1="351.3" x2="1232.0" y2="1590.0" stroke="rgba(20,110,240,0.62)" stroke-width="1.35"/>
<line x1="1368.4" y1="656.2" x2="1368.4" y2="1590.0" stroke="rgba(20,110,240,0.62)" stroke-width="1.35"/>
<line x1="1504.8" y1="1066.0" x2="1504.8" y2="1590.0" stroke="rgba(20,110,240,0.62)" stroke-width="1.35"/>
<line x1="1641.2" y1="1496.7" x2="1641.2" y2="1590.0" stroke="rgba(20,110,240,0.62)" stroke-width="1.35"/>
<polyline points="58.5,1589.5 73.0,1588.6 90.0,1584.3 105.5,1574.8 128.9,1533.9 143.8,1523.0 181.0,1588.7 452.8,1502.5 473.8,1462.6 497.3,1426.3 523.4,1378.4 541.5,1344.8 557.5,1314.7 580.4,1271.7 608.2,1218.7 623.7,1188.6 647.0,1143.3 662.7,1114.5 680.4,1082.2 695.0,1055.6 713.6,1021.6 727.5,996.3 747.3,959.3 764.1,927.8 788.2,882.7 814.3,833.5 829.5,804.0 846.1,771.8 862.0,739.6 879.8,703.5 897.7,667.2 916.6,628.9 936.0,589.6 956.5,548.1 971.4,518.5 993.0,475.9 1010.3,441.7 1033.6,395.7 1039.6,383.8 1045.6,372.0 1098.9,360.0 1232.0,351.3 1368.4,656.2 1504.8,1066.0 1641.2,1496.7" fill="none" stroke="#2873e6" stroke-width="1.35" stroke-linejoin="round"/>
<line x1="58.4" y1="1589.8" x2="1641.2" y2="1589.8" stroke="#3ad52a" stroke-width="2.4"/>
<line x1="58.4" y1="1589.0" x2="81" y2="1586.6" stroke="#2873e6" stroke-width="1.3"/>
<line x1="1670" y1="1590.0" x2="1673.2" y2="1590.0" stroke="#111" stroke-width="1.2"/>
<text x="1682.6" y="1597.5" font-size="18.3" fill="#1c1c1c">0 B</text>
<line x1="1670" y1="1515.2" x2="1672" y2="1515.2" stroke="#111" stroke-width="1.2"/>
<line x1="1670" y1="1440.3" x2="1673.2" y2="1440.3" stroke="#111" stroke-width="1.2"/>
<text x="1682.6" y="1447.8" font-size="18.3" fill="#1c1c1c">2.0 GB</text>
<line x1="1670" y1="1365.5" x2="1672" y2="1365.5" stroke="#111" stroke-width="1.2"/>
<line x1="1670" y1="1290.7" x2="1673.2" y2="1290.7" stroke="#111" stroke-width="1.2"/>
<text x="1682.6" y="1298.2" font-size="18.3" fill="#1c1c1c">4.0 GB</text>
<line x1="1670" y1="1215.8" x2="1672" y2="1215.8" stroke="#111" stroke-width="1.2"/>
<line x1="1670" y1="1141.0" x2="1673.2" y2="1141.0" stroke="#111" stroke-width="1.2"/>
<text x="1682.6" y="1148.5" font-size="18.3" fill="#1c1c1c">6.0 GB</text>
<line x1="1670" y1="1066.2" x2="1672" y2="1066.2" stroke="#111" stroke-width="1.2"/>
<line x1="1670" y1="991.4" x2="1673.2" y2="991.4" stroke="#111" stroke-width="1.2"/>
<text x="1682.6" y="998.9" font-size="18.3" fill="#1c1c1c">8.0 GB</text>
<line x1="1670" y1="916.5" x2="1672" y2="916.5" stroke="#111" stroke-width="1.2"/>
<line x1="1670" y1="841.7" x2="1673.2" y2="841.7" stroke="#111" stroke-width="1.2"/>
<text x="1682.6" y="849.2" font-size="18.3" fill="#1c1c1c">10.0 GB</text>
<line x1="1670" y1="766.9" x2="1672" y2="766.9" stroke="#111" stroke-width="1.2"/>
<line x1="1670" y1="692.0" x2="1673.2" y2="692.0" stroke="#111" stroke-width="1.2"/>
<text x="1682.6" y="699.5" font-size="18.3" fill="#1c1c1c">12.0 GB</text>
<line x1="1670" y1="617.2" x2="1672" y2="617.2" stroke="#111" stroke-width="1.2"/>
<line x1="1670" y1="542.4" x2="1673.2" y2="542.4" stroke="#111" stroke-width="1.2"/>
<text x="1682.6" y="549.9" font-size="18.3" fill="#1c1c1c">14.0 GB</text>
<line x1="1670" y1="467.5" x2="1672" y2="467.5" stroke="#111" stroke-width="1.2"/>
<line x1="1670" y1="392.7" x2="1673.2" y2="392.7" stroke="#111" stroke-width="1.2"/>
<text x="1682.6" y="400.2" font-size="18.3" fill="#1c1c1c">16.0 GB</text>
<line x1="1670" y1="317.9" x2="1672" y2="317.9" stroke="#111" stroke-width="1.2"/>
<line x1="1670" y1="243.1" x2="1673.2" y2="243.1" stroke="#111" stroke-width="1.2"/>
<text x="1682.6" y="250.6" font-size="18.3" fill="#1c1c1c">18.0 GB</text>
<line x1="58.4" y1="1592" x2="58.4" y2="1595.2" stroke="#111" stroke-width="1.2"/>
<text x="58.4" y="1623.2" font-size="19.4" fill="#1c1c1c" text-anchor="middle">0</text>
<line x1="98.3" y1="1592" x2="98.3" y2="1594" stroke="#111" stroke-width="1.2"/>
<line x1="138.2" y1="1592" x2="138.2" y2="1594" stroke="#111" stroke-width="1.2"/>
<line x1="178.1" y1="1592" x2="178.1" y2="1594" stroke="#111" stroke-width="1.2"/>
<line x1="218.1" y1="1592" x2="218.1" y2="1594" stroke="#111" stroke-width="1.2"/>
<line x1="258.0" y1="1592" x2="258.0" y2="1595.2" stroke="#111" stroke-width="1.2"/>
<text x="260.3" y="1623.2" font-size="19.4" fill="#1c1c1c" text-anchor="middle">1e+10</text>
<line x1="297.9" y1="1592" x2="297.9" y2="1594" stroke="#111" stroke-width="1.2"/>
<line x1="337.8" y1="1592" x2="337.8" y2="1594" stroke="#111" stroke-width="1.2"/>
<line x1="377.7" y1="1592" x2="377.7" y2="1594" stroke="#111" stroke-width="1.2"/>
<line x1="417.6" y1="1592" x2="417.6" y2="1594" stroke="#111" stroke-width="1.2"/>
<line x1="457.5" y1="1592" x2="457.5" y2="1595.2" stroke="#111" stroke-width="1.2"/>
<text x="459.8" y="1623.2" font-size="19.4" fill="#1c1c1c" text-anchor="middle">2e+10</text>
<line x1="497.5" y1="1592" x2="497.5" y2="1594" stroke="#111" stroke-width="1.2"/>
<line x1="537.4" y1="1592" x2="537.4" y2="1594" stroke="#111" stroke-width="1.2"/>
<line x1="577.3" y1="1592" x2="577.3" y2="1594" stroke="#111" stroke-width="1.2"/>
<line x1="617.2" y1="1592" x2="617.2" y2="1594" stroke="#111" stroke-width="1.2"/>
<line x1="657.1" y1="1592" x2="657.1" y2="1595.2" stroke="#111" stroke-width="1.2"/>
<text x="659.4" y="1623.2" font-size="19.4" fill="#1c1c1c" text-anchor="middle">3e+10</text>
<line x1="697.0" y1="1592" x2="697.0" y2="1594" stroke="#111" stroke-width="1.2"/>
<line x1="736.9" y1="1592" x2="736.9" y2="1594" stroke="#111" stroke-width="1.2"/>
<line x1="776.9" y1="1592" x2="776.9" y2="1594" stroke="#111" stroke-width="1.2"/>
<line x1="816.8" y1="1592" x2="816.8" y2="1594" stroke="#111" stroke-width="1.2"/>
<line x1="856.7" y1="1592" x2="856.7" y2="1595.2" stroke="#111" stroke-width="1.2"/>
<text x="859.0" y="1623.2" font-size="19.4" fill="#1c1c1c" text-anchor="middle">4e+10</text>
<line x1="896.6" y1="1592" x2="896.6" y2="1594" stroke="#111" stroke-width="1.2"/>
<line x1="936.5" y1="1592" x2="936.5" y2="1594" stroke="#111" stroke-width="1.2"/>
<line x1="976.4" y1="1592" x2="976.4" y2="1594" stroke="#111" stroke-width="1.2"/>
<line x1="1016.3" y1="1592" x2="1016.3" y2="1594" stroke="#111" stroke-width="1.2"/>
<line x1="1056.2" y1="1592" x2="1056.2" y2="1595.2" stroke="#111" stroke-width="1.2"/>
<text x="1058.5" y="1623.2" font-size="19.4" fill="#1c1c1c" text-anchor="middle">5e+10</text>
<line x1="1096.2" y1="1592" x2="1096.2" y2="1594" stroke="#111" stroke-width="1.2"/>
<line x1="1136.1" y1="1592" x2="1136.1" y2="1594" stroke="#111" stroke-width="1.2"/>
<line x1="1176.0" y1="1592" x2="1176.0" y2="1594" stroke="#111" stroke-width="1.2"/>
<line x1="1215.9" y1="1592" x2="1215.9" y2="1594" stroke="#111" stroke-width="1.2"/>
<line x1="1255.8" y1="1592" x2="1255.8" y2="1595.2" stroke="#111" stroke-width="1.2"/>
<text x="1258.1" y="1623.2" font-size="19.4" fill="#1c1c1c" text-anchor="middle">6e+10</text>
<line x1="1295.7" y1="1592" x2="1295.7" y2="1594" stroke="#111" stroke-width="1.2"/>
<line x1="1335.6" y1="1592" x2="1335.6" y2="1594" stroke="#111" stroke-width="1.2"/>
<line x1="1375.6" y1="1592" x2="1375.6" y2="1594" stroke="#111" stroke-width="1.2"/>
<line x1="1415.5" y1="1592" x2="1415.5" y2="1594" stroke="#111" stroke-width="1.2"/>
<line x1="1455.4" y1="1592" x2="1455.4" y2="1595.2" stroke="#111" stroke-width="1.2"/>
<text x="1457.7" y="1623.2" font-size="19.4" fill="#1c1c1c" text-anchor="middle">7e+10</text>
<line x1="1495.3" y1="1592" x2="1495.3" y2="1594" stroke="#111" stroke-width="1.2"/>
<line x1="1535.2" y1="1592" x2="1535.2" y2="1594" stroke="#111" stroke-width="1.2"/>
<line x1="1575.1" y1="1592" x2="1575.1" y2="1594" stroke="#111" stroke-width="1.2"/>
<line x1="1615.0" y1="1592" x2="1615.0" y2="1594" stroke="#111" stroke-width="1.2"/>
<line x1="1655.0" y1="1592" x2="1655.0" y2="1595.2" stroke="#111" stroke-width="1.2"/>
<text x="1657.3" y="1623.2" font-size="19.4" fill="#1c1c1c" text-anchor="middle">8e+10</text>
<text x="862.9" y="1662.7" font-size="24.0" fill="#1c1c1c" text-anchor="middle">time in i</text>
<text transform="translate(1787.2,916.5) rotate(-90)" font-size="22.9" fill="#1c1c1c" text-anchor="middle">memory heap size</text>
<text x="922.6" y="176.4" font-size="18.87" font-weight="bold" fill="#111" text-anchor="middle">Memory consumption of apparmor_parser</text>
<text x="923.5" y="197.8" font-size="18.5" font-style="italic" fill="#111" text-anchor="middle">Peak of 15.4 GiB at snapshot #65</text>
<g transform="translate(1245.4,366.1) rotate(-45)"><rect x="1" y="-12.3" width="78.8" height="24.6" fill="#fdfdfd" stroke="#ff0000" stroke-width="2.2"/><text x="40.4" y="6.9" font-size="19.3" fill="#1c1c1c" text-anchor="middle">15.4 GiB</text></g><rect x="-2.7" y="-2.7" width="5.4" height="5.4" fill="#ff0000" transform="translate(1232.1,350.6) rotate(45)"/>
<g transform="translate(508.2,1437.8) rotate(-45)"><rect x="1" y="-12.3" width="66.8" height="24.7" fill="#fdfdfd" stroke="#0a7aff" stroke-width="2.2"/><text x="34.4" y="6.9" font-size="19.3" fill="#1c1c1c" text-anchor="middle">2.0 GiB</text></g><rect x="-2.7" y="-2.7" width="5.4" height="5.4" fill="#0a7aff" transform="translate(497.2,1426.5) rotate(45)"/>
<g transform="translate(84.6,1603.4) rotate(-45)"><rect x="1" y="-12.3" width="72.0" height="24.7" fill="#fdfdfd" stroke="#ffa800" stroke-width="2.2"/><text x="37.0" y="6.9" font-size="19.3" fill="#1c1c1c" text-anchor="middle">1.6 MiB</text></g><rect x="-2.7" y="-2.7" width="5.4" height="5.4" fill="#ffa800" transform="translate(73.2,1589.4) rotate(45)"/>
<rect x="-2.6" y="-2.6" width="5.2" height="5.2" fill="#00f010" transform="translate(73.2,1589.4) rotate(45)"/>
<rect x="42" y="211" width="470" height="176.6" fill="none" stroke="#ffffff" stroke-width="1"/>
<rect x="43.5" y="212.5" width="467" height="173.6" fill="rgba(192,198,201,0.80)" stroke="#000" stroke-width="1.2"/>
<rect x="46.3" y="214.8" width="41.6" height="41.6" fill="#ff0000" stroke="#3a3a3a" stroke-width="1.2"/>
<rect x="46.3" y="258.0" width="41.6" height="41.6" fill="#007aff" stroke="#3a3a3a" stroke-width="1.2"/>
<rect x="46.3" y="301.2" width="41.6" height="41.6" fill="#00fa1e" stroke="#3a3a3a" stroke-width="1.2"/>
<rect x="46.3" y="344.4" width="41.6" height="41.6" fill="#ffaa00" stroke="#3a3a3a" stroke-width="1.2"/>
<text x="298.7" y="242.8" font-size="23.05" font-family='"Liberation Mono", monospace' fill="#1c1c1c" text-anchor="middle">Total Memory Heap Consumption</text>
<text x="298.3" y="286.4" font-size="22.85" font-family='"Liberation Mono", monospace' fill="#1c1c1c" text-anchor="middle">??? (in /sbin/apparmor_parser)</text>
<text x="298.3" y="329.4" font-size="22.85" font-family='"Liberation Mono", monospace' fill="#1c1c1c" text-anchor="middle">??? (in /sbin/apparmor_parser)</text>
<text x="298.3" y="372.4" font-size="22.85" font-family='"Liberation Mono", monospace' fill="#1c1c1c" text-anchor="middle">??? (in /sbin/apparmor_parser)</text>
</svg>
<div class="a" style="left:176.5px;top:1681.5px;width:111px;height:29px;background:linear-gradient(180deg,#e6e3df,#e9e6e2);border:1px solid #bab7b2;border-top:1px solid #aeaba7;border-radius:0 0 4px 4px;box-sizing:border-box"></div>
<div class="a" style="left:28px;top:1681px;width:149px;height:31.5px;background:#fcfaf8;border:1px solid #b3b0ab;border-top:none;border-radius:0 0 4px 4px;box-sizing:border-box"></div>
<span class="t" style="left:40.2px;top:1697.58px;font-size:19.4px;color:#1a1a1a;font-weight:normal;font-style:normal;">M<u>e</u>mory Chart</span>
<span class="t" style="left:188.5px;top:1696.49px;font-size:19.66px;color:#1a1a1a;font-weight:normal;font-style:normal;"><u>A</u>llocators</span>
<span class="t" style="left:1845.6px;top:107.83px;font-size:18.68px;color:#1a1a1a;font-weight:normal;font-style:normal;"><u>M</u>assif Data</span>
<svg class="a" style="left:2120px;top:100px" width="28" height="13">
<rect x="1" y="1.5" width="10" height="10" rx="2" fill="none" stroke="#6f6d69" stroke-width="1"/>
<rect x="3.2" y="5.5" width="4.2" height="4" fill="none" stroke="#55534f" stroke-width="1"/><path d="M5 5 v-1.4 h4.2 v4 h-1.4" fill="none" stroke="#55534f" stroke-width="1"/>
<rect x="15" y="1.5" width="10.5" height="10" rx="2" fill="none" stroke="#6f6d69" stroke-width="1"/>
<path d="M17.6 4 L23 9.2 M23 4 L17.6 9.2" stroke="#45433f" stroke-width="1.8"/>
</svg>
<div class="a" style="left:1850px;top:128px;width:289px;height:30px;background:#fff;border:1px solid #b8b5b0;border-radius:4px;box-sizing:border-box;box-shadow:inset 0 1px 1px rgba(0,0,0,.08)"></div>
<span class="t" style="left:1853.6px;top:143.51px;font-size:19.6px;color:#a09e9a;font-weight:normal;font-style:normal;letter-spacing:0.8px">filter</span>
<div class="a" style="left:1850px;top:164px;width:289px;height:1525px;background:#fff;border:1px solid #aaa7a2;box-sizing:border-box"></div>
<div class="row" style="top:165.80px;height:22.30px;background:rgb(255,255,255)"></div>
<span class="t" style="left:1874.8px;top:175.82px;font-size:18.71px;color:#141414;font-weight:normal;font-style:normal;">0 B: Snapshot #0</span>
<div class="row" style="top:187.80px;height:22.30px;background:rgb(255,255,255)"></div>
<span class="t" style="left:1874.8px;top:197.82px;font-size:18.71px;color:#141414;font-weight:normal;font-style:normal;">18.0 MiB: Snapshot #1</span>
<div class="row" style="top:209.80px;height:22.30px;background:rgb(254,255,254)"></div>
<span class="t" style="left:1874.8px;top:219.82px;font-size:18.71px;color:#141414;font-weight:normal;font-style:normal;">72.8 MiB: Snapshot #2</span>
<div class="row" style="top:231.80px;height:22.30px;background:rgb(252,255,252)"></div>
<span class="t" style="left:1874.8px;top:241.82px;font-size:18.71px;color:#141414;font-weight:normal;font-style:normal;">193.6 MiB: Snapshot #3</span>
<div class="row" style="top:253.80px;height:22.30px;background:rgb(245,255,244)"></div>
<span class="t" style="left:1874.8px;top:263.82px;font-size:18.71px;color:#141414;font-weight:normal;font-style:normal;">715.2 MiB: Snapshot #4</span>
<div class="row" style="top:275.80px;height:22.30px;background:rgb(244,255,242)"></div>
<span class="t" style="left:1874.8px;top:285.82px;font-size:18.71px;color:#141414;font-weight:normal;font-style:normal;">854.4 MiB: Snapshot #5</span>
<div class="row" style="top:297.80px;height:22.30px;background:rgb(250,255,249)"></div>
<span class="t" style="left:1874.8px;top:307.82px;font-size:18.71px;color:#141414;font-weight:normal;font-style:normal;">373.2 MiB: Snapshot #6</span>
<div class="row" style="top:319.80px;height:22.30px;background:rgb(255,255,255)"></div>
<span class="t" style="left:1874.8px;top:329.82px;font-size:18.71px;color:#141414;font-weight:normal;font-style:normal;">16.5 MiB: Snapshot #7</span>
<div class="row" style="top:341.80px;height:22.30px;background:rgb(253,255,253)"></div>
<span class="t" style="left:1874.8px;top:351.82px;font-size:18.71px;color:#141414;font-weight:normal;font-style:normal;">132.3 MiB: Snapshot #8</span>
<div class="row" style="top:363.80px;height:22.30px;background:rgb(252,255,252)"></div>
<span class="t" style="left:1874.8px;top:373.82px;font-size:18.71px;color:#141414;font-weight:normal;font-style:normal;">207.8 MiB: Snapshot #9</span>
<div class="row" style="top:385.80px;height:22.30px;background:rgb(250,255,250)"></div>
<span class="t" style="left:1874.8px;top:395.82px;font-size:18.71px;color:#141414;font-weight:normal;font-style:normal;">318.2 MiB: Snapshot #10</span>
<div class="row" style="top:407.80px;height:22.30px;background:rgb(249,255,249)"></div>
<span class="t" style="left:1874.8px;top:417.82px;font-size:18.71px;color:#141414;font-weight:normal;font-style:normal;">407.7 MiB: Snapshot #11</span>
<div class="row" style="top:429.80px;height:22.30px;background:rgb(248,255,247)"></div>
<span class="t" style="left:1874.8px;top:439.82px;font-size:18.71px;color:#141414;font-weight:normal;font-style:normal;">512.1 MiB: Snapshot #12</span>
<div class="row" style="top:451.80px;height:22.30px;background:rgb(247,255,246)"></div>
<span class="t" style="left:1874.8px;top:461.82px;font-size:18.71px;color:#141414;font-weight:normal;font-style:normal;">580.7 MiB: Snapshot #13</span>
<div class="row" style="top:473.80px;height:22.30px;background:rgb(246,255,245)"></div>
<span class="t" style="left:1874.8px;top:483.82px;font-size:18.71px;color:#141414;font-weight:normal;font-style:normal;">649.3 MiB: Snapshot #14</span>
<div class="row" style="top:495.80px;height:22.30px;background:rgb(245,255,244)"></div>
<span class="t" style="left:1874.8px;top:505.82px;font-size:18.71px;color:#141414;font-weight:normal;font-style:normal;">759.4 MiB: Snapshot #15</span>
<div class="row" style="top:517.80px;height:22.30px;background:rgb(244,255,243)"></div>
<span class="t" style="left:1874.8px;top:527.82px;font-size:18.71px;color:#141414;font-weight:normal;font-style:normal;">822.9 MiB: Snapshot #16</span>
<div class="row" style="top:539.80px;height:22.30px;background:rgb(243,255,242)"></div>
<span class="t" style="left:1874.8px;top:549.82px;font-size:18.71px;color:#141414;font-weight:normal;font-style:normal;">890.5 MiB: Snapshot #17</span>
<div class="row" style="top:561.80px;height:22.30px;background:rgb(243,255,242)"></div>
<span class="t" style="left:1874.8px;top:571.82px;font-size:18.71px;color:#141414;font-weight:normal;font-style:normal;">890.5 MiB: Snapshot #18</span>
<div class="row" style="top:583.80px;height:22.30px;background:rgb(241,255,238)"></div>
<span class="t" style="left:1874.8px;top:593.87px;font-size:18.55px;color:#141414;font-weight:normal;font-style:normal;">1.1 GiB: Snapshot #19</span>
<div class="row" style="top:605.80px;height:22.30px;background:rgb(236,255,231)"></div>
<span class="t" style="left:1874.8px;top:615.87px;font-size:18.55px;color:#141414;font-weight:normal;font-style:normal;">1.6 GiB: Snapshot #20</span>
<div class="row" style="top:627.80px;height:22.30px;background:rgb(233,255,226)"></div>
<span class="t" style="left:1874.8px;top:637.87px;font-size:18.55px;color:#141414;font-weight:normal;font-style:normal;">2.0 GiB: Snapshot #21</span>
<div class="row" style="top:649.80px;height:22.30px;background:rgb(230,255,218)"></div>
<span class="t" style="left:1874.8px;top:659.87px;font-size:18.55px;color:#141414;font-weight:normal;font-style:normal;">2.6 GiB: Snapshot #22</span>
<div class="row" style="top:671.80px;height:22.30px;background:rgb(229,255,213)"></div>
<span class="t" style="left:1874.8px;top:681.87px;font-size:18.55px;color:#141414;font-weight:normal;font-style:normal;">3.0 GiB: Snapshot #23</span>
<div class="row" style="top:693.80px;height:22.30px;background:rgb(229,255,208)"></div>
<span class="t" style="left:1874.8px;top:703.87px;font-size:18.55px;color:#141414;font-weight:normal;font-style:normal;">3.4 GiB: Snapshot #24</span>
<div class="row" style="top:715.80px;height:22.30px;background:rgb(229,255,201)"></div>
<span class="t" style="left:1874.8px;top:725.87px;font-size:18.55px;color:#141414;font-weight:normal;font-style:normal;">4.0 GiB: Snapshot #25</span>
<div class="row" style="top:737.80px;height:22.30px;background:rgb(230,255,194)"></div>
<span class="t" style="left:1874.8px;top:747.87px;font-size:18.55px;color:#141414;font-weight:normal;font-style:normal;">4.6 GiB: Snapshot #26</span>
<div class="row" style="top:759.80px;height:22.30px;background:rgb(232,255,190)"></div>
<span class="t" style="left:1874.8px;top:769.87px;font-size:18.55px;color:#141414;font-weight:normal;font-style:normal;">5.0 GiB: Snapshot #27</span>
<div class="row" style="top:781.80px;height:22.30px;background:rgb(235,255,185)"></div>
<span class="t" style="left:1874.8px;top:791.87px;font-size:18.55px;color:#141414;font-weight:normal;font-style:normal;">5.5 GiB: Snapshot #28</span>
<div class="row" style="top:803.80px;height:22.30px;background:rgb(238,255,181)"></div>
<span class="t" style="left:1874.8px;top:813.87px;font-size:18.55px;color:#141414;font-weight:normal;font-style:normal;">5.9 GiB: Snapshot #29</span>
<div class="row" style="top:825.80px;height:22.30px;background:rgb(242,255,176)"></div>
<span class="t" style="left:1874.8px;top:835.87px;font-size:18.55px;color:#141414;font-weight:normal;font-style:normal;">6.4 GiB: Snapshot #30</span>
<div class="row" style="top:847.80px;height:22.30px;background:rgb(244,255,173)"></div>
<span class="t" style="left:1874.8px;top:857.87px;font-size:18.55px;color:#141414;font-weight:normal;font-style:normal;">6.7 GiB: Snapshot #31</span>
<div class="row" style="top:869.80px;height:22.30px;background:rgb(248,255,170)"></div>
<span class="t" style="left:1874.8px;top:879.87px;font-size:18.55px;color:#141414;font-weight:normal;font-style:normal;">7.1 GiB: Snapshot #32</span>
<div class="row" style="top:891.80px;height:22.30px;background:rgb(251,255,167)"></div>
<span class="t" style="left:1874.8px;top:901.87px;font-size:18.55px;color:#141414;font-weight:normal;font-style:normal;">7.4 GiB: Snapshot #33</span>
<div class="row" style="top:913.80px;height:22.30px;background:rgb(255,254,164)"></div>
<span class="t" style="left:1874.8px;top:923.87px;font-size:18.55px;color:#141414;font-weight:normal;font-style:normal;">7.8 GiB: Snapshot #34</span>
<div class="row" style="top:935.80px;height:22.30px;background:rgb(255,249,161)"></div>
<span class="t" style="left:1874.8px;top:945.87px;font-size:18.55px;color:#141414;font-weight:normal;font-style:normal;">8.2 GiB: Snapshot #35</span>
<div class="row" style="top:957.80px;height:22.30px;background:rgb(255,241,157)"></div>
<span class="t" style="left:1874.8px;top:967.87px;font-size:18.55px;color:#141414;font-weight:normal;font-style:normal;">8.8 GiB: Snapshot #36</span>
<div class="row" style="top:979.80px;height:22.30px;background:rgb(255,233,153)"></div>
<span class="t" style="left:1874.8px;top:989.87px;font-size:18.55px;color:#141414;font-weight:normal;font-style:normal;">9.4 GiB: Snapshot #37</span>
<div class="row" style="top:1001.80px;height:22.30px;background:rgb(255,227,151)"></div>
<span class="t" style="left:1874.8px;top:1011.87px;font-size:18.55px;color:#141414;font-weight:normal;font-style:normal;">9.8 GiB: Snapshot #38</span>
<div class="row" style="top:1023.80px;height:22.30px;background:rgb(255,221,149)"></div>
<span class="t" style="left:1874.8px;top:1033.87px;font-size:18.55px;color:#141414;font-weight:normal;font-style:normal;">10.2 GiB: Snapshot #39</span>
<div class="row" style="top:1045.80px;height:22.30px;background:rgb(255,214,147)"></div>
<span class="t" style="left:1874.8px;top:1055.87px;font-size:18.55px;color:#141414;font-weight:normal;font-style:normal;">10.6 GiB: Snapshot #40</span>
<div class="row" style="top:1067.80px;height:22.30px;background:rgb(255,208,145)"></div>
<span class="t" style="left:1874.8px;top:1077.87px;font-size:18.55px;color:#141414;font-weight:normal;font-style:normal;">11.0 GiB: Snapshot #41</span>
<div class="row" style="top:1089.80px;height:22.30px;background:rgb(255,200,143)"></div>
<span class="t" style="left:1874.8px;top:1099.87px;font-size:18.55px;color:#141414;font-weight:normal;font-style:normal;">11.5 GiB: Snapshot #42</span>
<div class="row" style="top:1111.80px;height:22.30px;background:rgb(255,192,141)"></div>
<span class="t" style="left:1874.8px;top:1121.87px;font-size:18.55px;color:#141414;font-weight:normal;font-style:normal;">12.0 GiB: Snapshot #43</span>
<div class="row" style="top:1133.80px;height:22.30px;background:rgb(255,185,140)"></div>
<span class="t" style="left:1874.8px;top:1143.87px;font-size:18.55px;color:#141414;font-weight:normal;font-style:normal;">12.4 GiB: Snapshot #44</span>
<div class="row" style="top:1155.80px;height:22.30px;background:rgb(255,176,138)"></div>
<span class="t" style="left:1874.8px;top:1165.87px;font-size:18.55px;color:#141414;font-weight:normal;font-style:normal;">12.9 GiB: Snapshot #45</span>
<div class="row" style="top:1177.80px;height:22.30px;background:rgb(255,170,137)"></div>
<span class="t" style="left:1874.8px;top:1187.87px;font-size:18.55px;color:#141414;font-weight:normal;font-style:normal;">13.3 GiB: Snapshot #46</span>
<div class="row" style="top:1199.80px;height:22.30px;background:rgb(255,160,136)"></div>
<span class="t" style="left:1874.8px;top:1209.87px;font-size:18.55px;color:#141414;font-weight:normal;font-style:normal;">13.9 GiB: Snapshot #47</span>
<div class="row" style="top:1221.80px;height:22.30px;background:rgb(255,153,136)"></div>
<span class="t" style="left:1874.8px;top:1231.87px;font-size:18.55px;color:#141414;font-weight:normal;font-style:normal;">14.3 GiB: Snapshot #48</span>
<div class="row" style="top:1243.80px;height:22.30px;background:rgb(255,143,135)"></div>
<span class="t" style="left:1874.8px;top:1253.87px;font-size:18.55px;color:#141414;font-weight:normal;font-style:normal;">14.9 GiB: Snapshot #49</span>
<div class="row" style="top:1265.80px;height:22.30px;background:rgb(255,142,135)"></div>
<span class="t" style="left:1874.8px;top:1275.87px;font-size:18.55px;color:#141414;font-weight:normal;font-style:normal;">15.0 GiB: Snapshot #50</span>
<div class="row" style="top:1287.80px;height:22.30px;background:rgb(255,138,135)"></div>
<span class="t" style="left:1874.8px;top:1297.87px;font-size:18.55px;color:#141414;font-weight:normal;font-style:normal;">15.2 GiB: Snapshot #51</span>
<div class="row" style="top:1309.80px;height:22.30px;background:rgb(255,137,135)"></div>
<span class="t" style="left:1874.8px;top:1319.87px;font-size:18.55px;color:#141414;font-weight:normal;font-style:normal;">15.3 GiB: Snapshot #52</span>
<div class="row" style="top:1331.80px;height:22.30px;background:rgb(255,137,135)"></div>
<span class="t" style="left:1874.8px;top:1341.87px;font-size:18.55px;color:#141414;font-weight:normal;font-style:normal;">15.3 GiB: Snapshot #53</span>
<div class="row" style="top:1353.80px;height:22.30px;background:rgb(255,137,135)"></div>
<span class="t" style="left:1874.8px;top:1363.87px;font-size:18.55px;color:#141414;font-weight:normal;font-style:normal;">15.3 GiB: Snapshot #54</span>
<div class="row" style="top:1375.80px;height:22.30px;background:rgb(255,137,135)"></div>
<span class="t" style="left:1874.8px;top:1385.87px;font-size:18.55px;color:#141414;font-weight:normal;font-style:normal;">15.3 GiB: Snapshot #55</span>
<div class="row" style="top:1397.80px;height:22.30px;background:rgb(255,137,135)"></div>
<span class="t" style="left:1874.8px;top:1407.87px;font-size:18.55px;color:#141414;font-weight:normal;font-style:normal;">15.3 GiB: Snapshot #56</span>
<div class="row" style="top:1419.80px;height:22.30px;background:rgb(255,137,135)"></div>
<span class="t" style="left:1874.8px;top:1429.87px;font-size:18.55px;color:#141414;font-weight:normal;font-style:normal;">15.3 GiB: Snapshot #57</span>
<div class="row" style="top:1441.80px;height:22.30px;background:rgb(255,137,135)"></div>
<span class="t" style="left:1874.8px;top:1451.87px;font-size:18.55px;color:#141414;font-weight:normal;font-style:normal;">15.3 GiB: Snapshot #58</span>
<div class="row" style="top:1463.80px;height:22.30px;background:rgb(255,135,135)"></div>
<span class="t" style="left:1874.8px;top:1473.87px;font-size:18.55px;color:#141414;font-weight:normal;font-style:normal;">15.4 GiB: Snapshot #59</span>
<div class="row" style="top:1485.80px;height:22.30px;background:rgb(255,135,135)"></div>
<span class="t" style="left:1874.8px;top:1495.87px;font-size:18.55px;color:#141414;font-weight:normal;font-style:normal;">15.4 GiB: Snapshot #60</span>
<div class="row" style="top:1507.80px;height:22.30px;background:rgb(255,135,135)"></div>
<span class="t" style="left:1874.8px;top:1517.87px;font-size:18.55px;color:#141414;font-weight:normal;font-style:normal;">15.4 GiB: Snapshot #61</span>
<div class="row" style="top:1529.80px;height:22.30px;background:rgb(255,135,135)"></div>
<span class="t" style="left:1874.8px;top:1539.87px;font-size:18.55px;color:#141414;font-weight:normal;font-style:normal;">15.4 GiB: Snapshot #62</span>
<div class="row" style="top:1551.80px;height:22.30px;background:rgb(255,135,135)"></div>
<span class="t" style="left:1874.8px;top:1561.87px;font-size:18.55px;color:#141414;font-weight:normal;font-style:normal;">15.4 GiB: Snapshot #63</span>
<div class="row" style="top:1573.80px;height:22.30px;background:rgb(255,135,135)"></div>
<span class="t" style="left:1874.8px;top:1583.87px;font-size:18.55px;color:#141414;font-weight:normal;font-style:normal;">15.4 GiB: Snapshot #64</span>
<div class="row" style="top:1595.80px;height:22.30px;background:rgb(255,135,135)"></div>
<span class="t" style="left:1874.8px;top:1605.87px;font-size:18.55px;color:#141414;font-weight:normal;font-style:normal;">15.4 GiB: Snapshot #65 (p…</span>
<div class="row" style="top:1617.80px;height:22.30px;background:rgb(255,135,135)"></div>
<span class="t" style="left:1874.8px;top:1627.87px;font-size:18.55px;color:#141414;font-weight:normal;font-style:normal;">15.4 GiB: Snapshot #66</span>
<div class="row" style="top:1639.80px;height:22.30px;background:rgb(255,135,135)"></div>
<span class="t" style="left:1874.8px;top:1649.87px;font-size:18.55px;color:#141414;font-weight:normal;font-style:normal;">15.4 GiB: Snapshot #67</span>
<div class="row" style="top:1661.80px;height:22.30px;background:rgb(255,142,135)"></div>
<span class="t" style="left:1874.8px;top:1671.87px;font-size:18.55px;color:#141414;font-weight:normal;font-style:normal;">15.0 GiB: Snapshot #68</span>
<div class="row" style="top:1683.80px;height:4.20px;background:rgb(255,148,135)"></div>
<div class="a" style="left:1871px;top:1683.8px;width:253px;height:4.2px;overflow:hidden"><span class="t" style="left:3.8px;top:11.2px;font-size:18.55px;color:#141414">14.6 GiB: Snapshot #69</span></div>
<svg class="a" style="left:0;top:0" width="2158" height="1769"><path d="M1857.8 193.4 L1863.3 198.8 L1857.8 204.2Z" fill="#4a4a4a"/><path d="M1857.8 215.4 L1863.3 220.8 L1857.8 226.2Z" fill="#4a4a4a"/><path d="M1857.8 237.4 L1863.3 242.8 L1857.8 248.2Z" fill="#4a4a4a"/><path d="M1857.8 259.4 L1863.3 264.8 L1857.8 270.2Z" fill="#4a4a4a"/><path d="M1857.8 281.4 L1863.3 286.8 L1857.8 292.2Z" fill="#4a4a4a"/><path d="M1857.8 325.4 L1863.3 330.8 L1857.8 336.2Z" fill="#4a4a4a"/><path d="M1857.8 589.4 L1863.3 594.8 L1857.8 600.2Z" fill="#4a4a4a"/><path d="M1857.8 611.4 L1863.3 616.8 L1857.8 622.2Z" fill="#4a4a4a"/><path d="M1857.8 633.4 L1863.3 638.8 L1857.8 644.2Z" fill="#4a4a4a"/><path d="M1857.8 655.4 L1863.3 660.8 L1857.8 666.2Z" fill="#4a4a4a"/><path d="M1857.8 677.4 L1863.3 682.8 L1857.8 688.2Z" fill="#4a4a4a"/><path d="M1857.8 699.4 L1863.3 704.8 L1857.8 710.2Z" fill="#4a4a4a"/><path d="M1857.8 721.4 L1863.3 726.8 L1857.8 732.2Z" fill="#4a4a4a"/><path d="M1857.8 743.4 L1863.3 748.8 L1857.8 754.2Z" fill="#4a4a4a"/><path d="M1857.8 765.4 L1863.3 770.8 L1857.8 776.2Z" fill="#4a4a4a"/><path d="M1857.8 787.4 L1863.3 792.8 L1857.8 798.2Z" fill="#4a4a4a"/><path d="M1857.8 809.4 L1863.3 814.8 L1857.8 820.2Z" fill="#4a4a4a"/><path d="M1857.8 831.4 L1863.3 836.8 L1857.8 842.2Z" fill="#4a4a4a"/><path d="M1857.8 853.4 L1863.3 858.8 L1857.8 864.2Z" fill="#4a4a4a"/><path d="M1857.8 875.4 L1863.3 880.8 L1857.8 886.2Z" fill="#4a4a4a"/><path d="M1857.8 897.4 L1863.3 902.8 L1857.8 908.2Z" fill="#4a4a4a"/><path d="M1857.8 919.4 L1863.3 924.8 L1857.8 930.2Z" fill="#4a4a4a"/><path d="M1857.8 941.4 L1863.3 946.8 L1857.8 952.2Z" fill="#4a4a4a"/><path d="M1857.8 963.4 L1863.3 968.8 L1857.8 974.2Z" fill="#4a4a4a"/><path d="M1857.8 985.4 L1863.3 990.8 L1857.8 996.2Z" fill="#4a4a4a"/><path d="M1857.8 1007.4 L1863.3 1012.8 L1857.8 1018.2Z" fill="#4a4a4a"/><path d="M1857.8 1029.4 L1863.3 1034.8 L1857.8 1040.2Z" fill="#4a4a4a"/><path d="M1857.8 1051.4 L1863.3 1056.8 L1857.8 1062.2Z" fill="#4a4a4a"/><path d="M1857.8 1073.4 L1863.3 1078.8 L1857.8 1084.2Z" fill="#4a4a4a"/><path d="M1857.8 1095.4 L1863.3 1100.8 L1857.8 1106.2Z" fill="#4a4a4a"/><path d="M1857.8 1117.4 L1863.3 1122.8 L1857.8 1128.2Z" fill="#4a4a4a"/><path d="M1857.8 1139.4 L1863.3 1144.8 L1857.8 1150.2Z" fill="#4a4a4a"/><path d="M1857.8 1161.4 L1863.3 1166.8 L1857.8 1172.2Z" fill="#4a4a4a"/><path d="M1857.8 1183.4 L1863.3 1188.8 L1857.8 1194.2Z" fill="#4a4a4a"/><path d="M1857.8 1205.4 L1863.3 1210.8 L1857.8 1216.2Z" fill="#4a4a4a"/><path d="M1857.8 1227.4 L1863.3 1232.8 L1857.8 1238.2Z" fill="#4a4a4a"/><path d="M1857.8 1249.4 L1863.3 1254.8 L1857.8 1260.2Z" fill="#4a4a4a"/><path d="M1857.8 1271.4 L1863.3 1276.8 L1857.8 1282.2Z" fill="#4a4a4a"/><path d="M1857.8 1293.4 L1863.3 1298.8 L1857.8 1304.2Z" fill="#4a4a4a"/><path d="M1857.8 1381.4 L1863.3 1386.8 L1857.8 1392.2Z" fill="#4a4a4a"/><path d="M1857.8 1601.4 L1863.3 1606.8 L1857.8 1612.2Z" fill="#4a4a4a"/></svg>
<div class="a" style="left:2124px;top:165px;width:14px;height:1523px;background:#dddbd8;border-left:1px solid #c2bfba;box-sizing:border-box"></div>
<div class="a" style="left:2124px;top:180px;width:14px;height:1051px;background:linear-gradient(90deg,#fefefd,#f3f2f0);border:1px solid #c2bfba;border-right:none;box-sizing:border-box"></div>
<div class="a" style="left:2124px;top:165px;width:14px;height:15px;background:#f7f6f4;border-left:1px solid #c2bfba;border-bottom:1px solid #c2bfba;box-sizing:border-box"></div>
<div class="a" style="left:2124px;top:1673px;width:14px;height:15px;background:#f7f6f4;border-left:1px solid #c2bfba;border-top:1px solid #c2bfba;box-sizing:border-box"></div>
<svg class="a" style="left:2124px;top:165px" width="14" height="1523"><path d="M3.6 9.6 L7.5 5.4 L11.4 9.6Z" fill="#4f4f4f"/><path d="M3.6 1513.6 L7.5 1517.8 L11.4 1513.6Z" fill="#4f4f4f"/></svg>
<div class="a" style="left:1841px;top:1699.5px;width:183px;height:29.5px;background:linear-gradient(180deg,#dedbd8,#e3e0dd);border:1px solid #b8b5b0;border-radius:3px 0 0 4px;box-sizing:border-box"></div>
<div class="a" style="left:2023.5px;top:1699px;width:124.5px;height:31.5px;background:#f5f3f0;border:1px solid #b8b5b0;border-top:none;border-right:none;border-radius:0 0 4px 4px;box-sizing:border-box"></div>
<span class="t" style="left:1853.3px;top:1714.53px;font-size:19.53px;color:#1a1a1a;font-weight:normal;font-style:normal;"><u>C</u>ustom Allocators</span>
<span class="t" style="left:2035.6px;top:1715.78px;font-size:18.83px;color:#1a1a1a;font-weight:normal;font-style:normal;"><u>M</u>assif Data</span>
<svg class="a" style="left:2132px;top:1743px" width="16" height="16"><g fill="#c9c6c1"><rect x="11" y="3" width="2" height="2"/><rect x="7" y="7" width="2" height="2"/><rect x="11" y="7" width="2" height="2"/><rect x="3" y="11" width="2" height="2"/><rect x="7" y="11" width="2" height="2"/><rect x="11" y="11" width="2" height="2"/></g></svg>
<svg class="a" style="left:1836px;top:905px" width="4" height="22"><g fill="#d3d0cb"><rect x="1" y="1" width="1" height="1"/><rect x="1" y="5" width="1" height="1"/><rect x="1" y="9" width="1" height="1"/><rect x="1" y="13" width="1" height="1"/><rect x="1" y="17" width="1" height="1"/></g></svg>
</body></html>
